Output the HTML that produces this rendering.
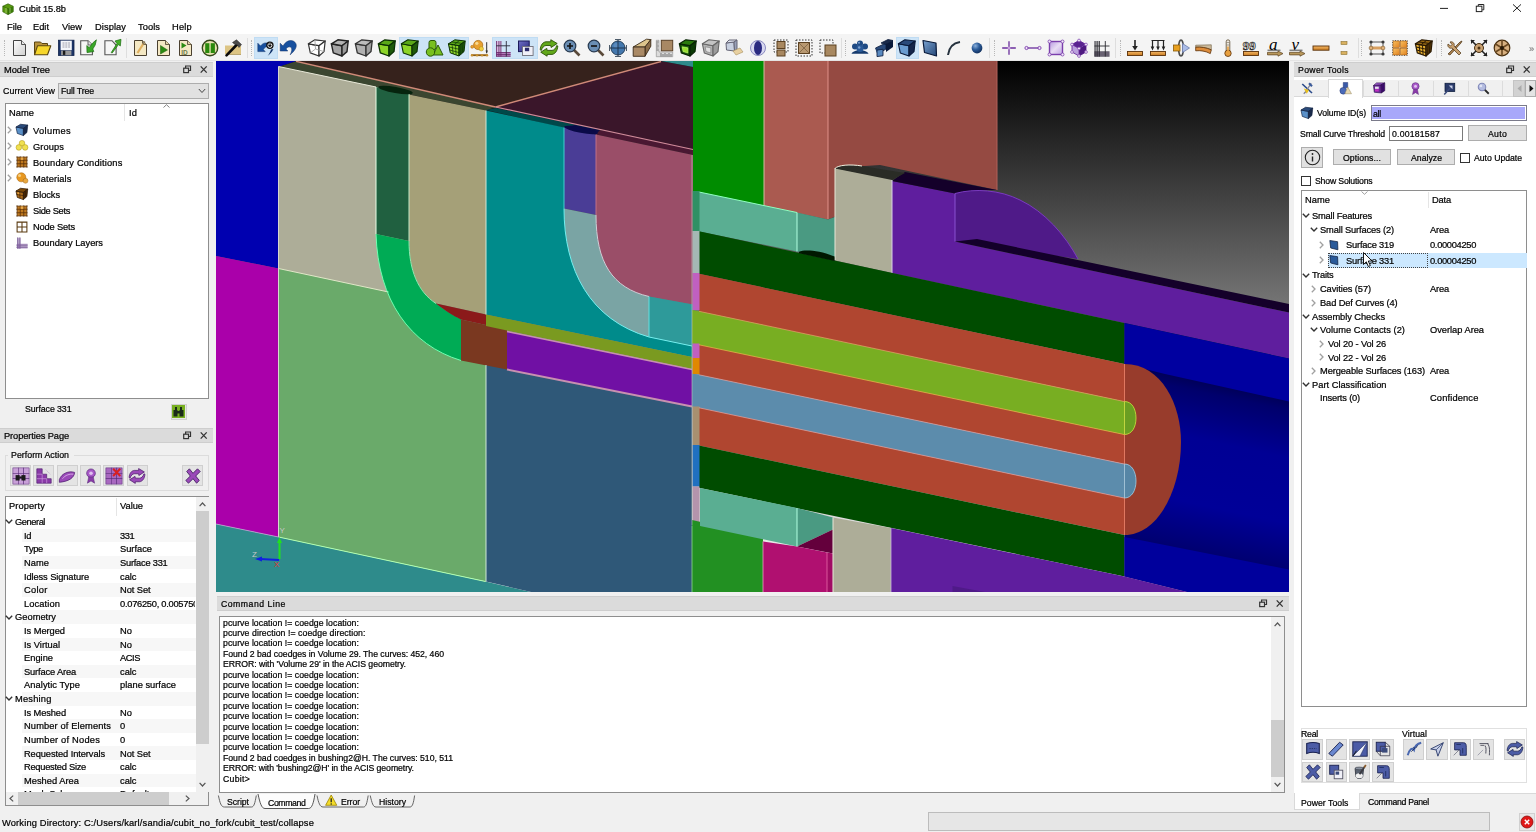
<!DOCTYPE html>
<html lang="en"><head><meta charset="utf-8"><title>Cubit 15.8b</title>
<style>
*{box-sizing:border-box;margin:0;padding:0}
html,body{width:1536px;height:832px;overflow:hidden;background:#f0f0f0;font-family:"Liberation Sans",sans-serif;color:#000;-webkit-font-smoothing:antialiased}
#app{position:relative;width:1536px;height:832px;overflow:hidden;background:#f0f0f0}
.t{position:absolute;white-space:pre;line-height:16px;height:16px;will-change:transform;-webkit-text-stroke:0.22px currentColor}
.s{font-size:10px}
.m{font-size:9.3px}
.h{font-size:8.8px}
.c{font-size:8.7px}
.ic{position:absolute;overflow:visible}
.btn{background:#e1e1e1;border:1px solid #adadad}
.hl{position:absolute;background:#cde4f7;border:1px solid #c0dcf3}
.dock{position:absolute;background:#dbdbdb;border-top:1px solid #cecece;border-bottom:1px solid #cecece}
.white{background:#fff;border:1px solid #8e8e8e}
.sep{position:absolute;width:1px;background:#dedede}
.hd{position:absolute;width:2px;border-left:1px dotted #b8b8b8}
</style></head><body><div id="app">
<div class="" style="position:absolute;left:0.0px;top:0.0px;width:1536.0px;height:18.0px;background:#fff"></div>
<svg class="ic" style="left:2px;top:3px" width="12" height="12" viewBox="0 0 15 15"><path d="M7.5,1 L14,4 V11 L7.5,14.5 L1,11 V4 Z" fill="#5a9a10" stroke="#2a5a04" stroke-width="0.8"/><path d="M7.5,7 L14,4 V11 L7.5,14.5 Z" fill="#3a7a08"/><path d="M7.5,7 V14.5 M7.5,7 L1,4" stroke="#2a5a04" stroke-width="0.8"/><path d="M5,6 V12.5 M10,6 V12.5" stroke="#d0e8a0" stroke-width="0.7"/></svg>
<span id="t1" class="t m" style="left:19.0px;top:1.1px;letter-spacing:-0.051px;">Cubit 15.8b</span>
<svg class="ic" style="left:1436px;top:2px" width="90" height="14" viewBox="1436 2 90 14"><path d="M1440,8.400 H1448" stroke="#222" stroke-width="1"/><rect x="1476.3" y="6.200" width="5.6" height="5.400" fill="none" stroke="#222" stroke-width="1"/><path d="M1478.300,6 V4.500 H1483.800 V9.800 H1482.200" fill="none" stroke="#222" stroke-width="1"/><path d="M1513,4.400 L1521,11.800 M1521,4.400 L1513,11.800" stroke="#222" stroke-width="1"/></svg>
<div class="" style="position:absolute;left:0.0px;top:18.0px;width:1536.0px;height:16.0px;background:#fff"></div>
<span id="t2" class="t m" style="left:6.5px;top:18.9px;letter-spacing:0.004px;">File</span>
<span id="t3" class="t m" style="left:33.0px;top:18.9px;letter-spacing:-0.008px;">Edit</span>
<span id="t4" class="t m" style="left:62.0px;top:18.9px;letter-spacing:0.004px;">View</span>
<span id="t5" class="t m" style="left:95.0px;top:18.9px;letter-spacing:0.074px;">Display</span>
<span id="t6" class="t m" style="left:138.0px;top:18.9px;letter-spacing:0.059px;">Tools</span>
<span id="t7" class="t m" style="left:172.0px;top:18.9px;letter-spacing:0.219px;">Help</span>
<div class="" style="position:absolute;left:0.0px;top:34.0px;width:1536.0px;height:27.0px;background:#f4f4f4;border-bottom:1px solid #e4e4e4"></div>
<div class="hd" style="left:4.0px;top:40px;height:16px"></div>
<div class="hd" style="left:251.0px;top:40px;height:16px"></div>
<div class="hd" style="left:845.0px;top:40px;height:16px"></div>
<div class="hd" style="left:994.0px;top:40px;height:16px"></div>
<div class="hd" style="left:1120.0px;top:40px;height:16px"></div>
<div class="hd" style="left:1361.0px;top:40px;height:16px"></div>
<div class="hd" style="left:1440.5px;top:40px;height:16px"></div>
<div class="sep" style="left:126.0px;top:38px;height:20px"></div>
<div class="sep" style="left:246.5px;top:38px;height:20px"></div>
<div class="sep" style="left:841.0px;top:38px;height:20px"></div>
<div class="sep" style="left:989.0px;top:38px;height:20px"></div>
<div class="sep" style="left:1115.0px;top:38px;height:20px"></div>
<div class="sep" style="left:1357.5px;top:38px;height:20px"></div>
<div class="sep" style="left:1436.0px;top:38px;height:20px"></div>
<div class="hl" style="left:254.0px;top:37px;width:24.0px;height:21.5px"></div>
<div class="hl" style="left:399.0px;top:37px;width:69.5px;height:21.5px"></div>
<div class="hl" style="left:492.0px;top:37px;width:46.0px;height:21.5px"></div>
<div class="hl" style="left:895.5px;top:37px;width:23.5px;height:21.5px"></div>
<svg class="ic" style="left:10.0px;top:38.0px" width="20" height="20" viewBox="0 0 20 20"><defs><linearGradient id="gnew" x1="0" y1="0" x2="1" y2="1"><stop offset="0" stop-color="#fff"/><stop offset="1" stop-color="#d0d0d0"/></linearGradient></defs><path d="M3.500,2.500 H11.500 L15.500,6.500 V17.500 H3.500 Z" fill="url(#gnew)" stroke="#444" stroke-width="1"/><path d="M11.500,2.500 V6.500 H15.500" fill="#e8e8e8" stroke="#444" stroke-width="0.900"/></svg>
<svg class="ic" style="left:32.0px;top:38.0px" width="20" height="20" viewBox="0 0 20 20"><path d="M2.500,16.500 V4 H8.500 L10,5.500 H15.500 V8" fill="#b8923c" stroke="#5a4510" stroke-width="1"/><path d="M2.500,16.800 L5.500,7.800 H18.800 L15.500,16.800 Z" fill="#f6d62c" stroke="#5a4510" stroke-width="1.1" stroke-linejoin="round"/></svg>
<svg class="ic" style="left:56.0px;top:38.0px" width="20" height="20" viewBox="0 0 20 20"><rect x="2.500" y="2.200" width="15.500" height="15.300" fill="#1c3468" stroke="#10224a" stroke-width="0.8"/><rect x="4.600" y="2.700" width="11.200" height="9.400" fill="#f4f6fa"/><rect x="5.100" y="12.500" width="10.300" height="4.800" fill="#9a9a9a"/><rect x="6.900" y="12.700" width="2.400" height="4.200" fill="#1a1a1a"/><path d="M6.500,5 H14 M6.500,7 H14 M6.500,9 H14" stroke="#8a8a98" stroke-width="0.8" stroke-dasharray="2,0.800"/></svg>
<svg class="ic" style="left:78.0px;top:38.0px" width="20" height="20" viewBox="0 0 20 20"><path d="M2.700,2.700 H10 L14.400,7 V16.750 H2.700 Z" fill="#f6f6f6" stroke="#555" stroke-width="1.1"/><path d="M10,2.700 V7 H14.400" fill="#e0e0e0" stroke="#555" stroke-width="0.9"/><path d="M18.400,1.800 L17.200,7 L14.800,11 L15.800,13.600 L9,14.600 L8.800,7.500 L11.200,9.600 L15.200,4.500 Z" fill="#3aa828" stroke="#1a6a10" stroke-width="0.7"/></svg>
<svg class="ic" style="left:102.0px;top:38.0px" width="20" height="20" viewBox="0 0 20 20"><path d="M2.900,2.700 H10 L14.100,7 V16.750 H2.900 Z" fill="#f6f6f6" stroke="#555" stroke-width="1.1"/><path d="M9.200,14.600 L15,5.500 L13,3 L19,1.300 L18.300,8 L16.500,6.500 L10.200,15 Z" fill="#44b028" stroke="#1a6a10" stroke-width="0.7"/></svg>
<svg class="ic" style="left:131.0px;top:38.0px" width="20" height="20" viewBox="0 0 20 20"><path d="M3.500,2.500 H11.500 L15.500,6.500 V17.500 H3.500 Z" fill="#f4e8c4" stroke="#4a4030" stroke-width="1"/><path d="M11.500,2.500 V6.500 H15.500" fill="#e4d4a8" stroke="#4a4030" stroke-width="0.8"/><path d="M6.500,15 L12.500,5.500" stroke="#e0b060" stroke-width="2.200"/><path d="M12,6.500 L13.800,3.500" stroke="#8a7a5a" stroke-width="1.600"/></svg>
<svg class="ic" style="left:154.0px;top:38.0px" width="20" height="20" viewBox="0 0 20 20"><path d="M3.500,2.500 H11.500 L15.500,6.500 V17.500 H3.500 Z" fill="#f4e8c4" stroke="#4a4030" stroke-width="1"/><path d="M11.500,2.500 V6.500 H15.500" fill="#e4d4a8" stroke="#4a4030" stroke-width="0.8"/><path d="M6.500,7.500 L13.500,12 L6.500,16 Z" fill="#2a8a12" stroke="#1a5a08" stroke-width="0.500"/></svg>
<svg class="ic" style="left:176.0px;top:38.0px" width="20" height="20" viewBox="0 0 20 20"><path d="M3.500,2.500 H11.500 L15.500,6.500 V17.500 H3.500 Z" fill="#f4e8c4" stroke="#4a4030" stroke-width="1"/><path d="M11.500,2.500 V6.500 H15.500" fill="#e4d4a8" stroke="#4a4030" stroke-width="0.8"/><path d="M5.500,4.500 L10.500,7.500 L5.500,10.500 Z" fill="#2a8a12"/><text x="5.300" y="16.600" font-family="Liberation Sans,sans-serif" font-size="6.500" font-weight="bold" fill="#6a7a4a">ID</text></svg>
<svg class="ic" style="left:200.0px;top:38.0px" width="20" height="20" viewBox="0 0 20 20"><circle cx="10" cy="10" r="7.700" fill="#e6e2b0" stroke="#34481a" stroke-width="1.400"/><rect x="5.200" y="5.200" width="4.200" height="9.800" fill="#2a8a0c"/><rect x="10.700" y="5.200" width="4.200" height="9.800" fill="#2a8a0c"/></svg>
<svg class="ic" style="left:222.0px;top:38.0px" width="20" height="20" viewBox="0 0 20 20"><rect x="3" y="7.500" width="16" height="8.500" fill="#dcc484"/><path d="M4,16.500 H19" stroke="#a89050" stroke-width="0.800"/><path d="M4.500,17.300 L15,6.500" stroke="#0a0a0a" stroke-width="2.600" stroke-linecap="round"/><path d="M10.500,4.500 L14.500,1.800 L19.500,6.500 L17,9.500 L15.500,7 L13,6.500 Z" fill="#4a4a4a" stroke="#222" stroke-width="0.500"/></svg>
<svg class="ic" style="left:256.0px;top:38.0px" width="20" height="20" viewBox="0 0 20 20"><path d="M1.8,5.2 L1.8,13.6 L9.2,13.6 L7.300,11.500 C8.500,9.500 10,8.500 12,8.500 L11,5 C8,4.500 6,6 4.500,8 Z" fill="#17509e" stroke="#0c2e66" stroke-width="0.5"/><path d="M17.4,11 C16,14 14,16.500 11.700,17.800 C13.500,15.500 14.500,13.500 15,11.500 Z" fill="#0c2e66"/><circle cx="13.9" cy="7.2" r="3.7" fill="#111"/><circle cx="13.9" cy="7.4" r="2" fill="none" stroke="#eee" stroke-width="1"/><path d="M13.9,4.400 V7.200" stroke="#111" stroke-width="2"/><path d="M13.9,4.600 V7" stroke="#eee" stroke-width="0.9"/></svg>
<svg class="ic" style="left:278.0px;top:38.0px" width="20" height="20" viewBox="0 0 20 20"><path d="M2.2,5.2 L2.2,13 L9.8,13 L8,11 C9.500,8.800 12,8.200 13.200,9.500 C14.500,11 13.500,14 12.200,16.800 C16.500,13 19.500,9 17.800,5.500 C15.800,1.500 9,0.800 5,8 Z" fill="#17509e" stroke="#0c2e66" stroke-width="0.5"/></svg>
<svg class="ic" style="left:307.0px;top:38.0px" width="20" height="20" viewBox="0 0 20 20"><path d="M1.4,5.8 L12,7.7 L12,18 L3.3,14.9 Z" fill="#fff" stroke="#333" stroke-width="1.2" stroke-linejoin="round"/><path d="M1.4,5.8 L7.9,1.8 L18.2,3 L12,7.7 Z" fill="#fff" stroke="#333" stroke-width="1.2" stroke-linejoin="round"/><path d="M12,7.7 L18.2,3 L17,13.6 L12,18 Z" fill="#fff" stroke="#333" stroke-width="1.2" stroke-linejoin="round"/><path d="M7.9,1.8 L8.5,11 L3.3,14.9 M8.5,11 L17,13.6" stroke="#999" stroke-width="0.8" fill="none"/></svg>
<svg class="ic" style="left:330.0px;top:38.0px" width="20" height="20" viewBox="0 0 20 20"><path d="M1.4,5.8 L12,7.7 L12,18 L3.3,14.9 Z" fill="#a4a4a4" stroke="#222" stroke-width="1.4" stroke-linejoin="round"/><path d="M1.4,5.8 L7.9,1.8 L18.2,3 L12,7.7 Z" fill="#b4b4b4" stroke="#222" stroke-width="1.4" stroke-linejoin="round"/><path d="M12,7.7 L18.2,3 L17,13.6 L12,18 Z" fill="#9a9a9a" stroke="#222" stroke-width="1.4" stroke-linejoin="round"/></svg>
<svg class="ic" style="left:354.0px;top:38.0px" width="20" height="20" viewBox="0 0 20 20"><path d="M1.4,5.8 L12,7.7 L12,18 L3.3,14.9 Z" fill="#b0b0b0" stroke="#333" stroke-width="1.3" stroke-linejoin="round"/><path d="M1.4,5.8 L7.9,1.8 L18.2,3 L12,7.7 Z" fill="#bcbcbc" stroke="#333" stroke-width="1.3" stroke-linejoin="round"/><path d="M12,7.7 L18.2,3 L17,13.6 L12,18 Z" fill="#a0a0a0" stroke="#333" stroke-width="1.3" stroke-linejoin="round"/></svg>
<svg class="ic" style="left:377.0px;top:38.0px" width="20" height="20" viewBox="0 0 20 20"><path d="M1.4,5.8 L12,7.7 L12,18 L3.3,14.9 Z" fill="#8cd428" stroke="#0c3004" stroke-width="1.3" stroke-linejoin="round"/><path d="M1.4,5.8 L7.9,1.8 L18.2,3 L12,7.7 Z" fill="#5aa818" stroke="#0c3004" stroke-width="1.3" stroke-linejoin="round"/><path d="M12,7.7 L18.2,3 L17,13.6 L12,18 Z" fill="#1e5a0a" stroke="#0c3004" stroke-width="1.3" stroke-linejoin="round"/></svg>
<svg class="ic" style="left:400.0px;top:38.0px" width="20" height="20" viewBox="0 0 20 20"><path d="M1.4,5.8 L12,7.7 L12,18 L3.3,14.9 Z" fill="#8cd428" stroke="#0c3004" stroke-width="1.1" stroke-linejoin="round"/><path d="M1.4,5.8 L7.9,1.8 L18.2,3 L12,7.7 Z" fill="#5aa818" stroke="#0c3004" stroke-width="1.1" stroke-linejoin="round"/><path d="M12,7.7 L18.2,3 L17,13.6 L12,18 Z" fill="#1e5a0a" stroke="#0c3004" stroke-width="1.1" stroke-linejoin="round"/></svg>
<svg class="ic" style="left:424.0px;top:38.0px" width="20" height="20" viewBox="0 0 20 20"><rect x="5" y="2.5" width="7" height="9" rx="2" fill="#78c020" stroke="#2a5a08"/><path d="M14,7 L19,17 H9 Z" fill="#78c020" stroke="#2a5a08"/><circle cx="6.5" cy="14" r="4.2" fill="#78c020" stroke="#2a5a08"/></svg>
<svg class="ic" style="left:447.0px;top:38.0px" width="20" height="20" viewBox="0 0 20 20"><path d="M1.4,5.8 L12,7.7 L12,18 L3.3,14.9 Z" fill="#8cd428" stroke="#0c3004" stroke-width="1.0" stroke-linejoin="round"/><path d="M1.4,5.8 L7.9,1.8 L18.2,3 L12,7.7 Z" fill="#5aa818" stroke="#0c3004" stroke-width="1.0" stroke-linejoin="round"/><path d="M12,7.7 L18.2,3 L17,13.6 L12,18 Z" fill="#1e5a0a" stroke="#0c3004" stroke-width="1.0" stroke-linejoin="round"/><path d="M5,6.4 L6.2,16 M8.5,7.1 L9.1,17 M2,9 L12,11.2 M2.7,12 L12,14.6 M14,6.1 L13.7,16.5 M16,4.6 L15.4,15 M4.6,3.9 L15,5.4 M12.5,2.400 L7,6.8" stroke="#0c3004" stroke-width="0.7"/></svg>
<svg class="ic" style="left:470.0px;top:38.0px" width="20" height="20" viewBox="0 0 20 20"><circle cx="8.200" cy="7" r="4.600" fill="#e8a030" stroke="#a86810" stroke-width="0.700"/><circle cx="6.800" cy="5.300" r="1.600" fill="#f8d890"/><circle cx="11.300" cy="10.800" r="2.200" fill="#f0d040" stroke="#a88010" stroke-width="0.500"/><circle cx="2.200" cy="8.800" r="1.500" fill="#e8a030" stroke="#a86810" stroke-width="0.500"/><path d="M16.700,4.200 V15.200" stroke="#333" stroke-width="1"/><path d="M15.500,12.500 H17.900 L16.700,15.500 Z" fill="#333"/><path d="M1.200,17.200 H17.500" stroke="#8a5a10" stroke-width="1.800"/><g fill="#c89030"><circle cx="2" cy="17.200" r="1.200"/><circle cx="7" cy="17.200" r="1.200"/><circle cx="12" cy="17.200" r="1.200"/><circle cx="17" cy="17.200" r="1.200"/></g></svg>
<svg class="ic" style="left:494.0px;top:38.0px" width="20" height="20" viewBox="0 0 20 20"><rect x="2.100" y="3" width="5.200" height="15.500" fill="#d8a8d0" opacity="0.700"/><rect x="2.100" y="14" width="14.500" height="4.500" fill="#a860a8" opacity="0.800"/><path d="M2.500,3 V18.500 M4.900,3 V18.500 M6.900,3 V18.500 M2.100,14.500 H16.600 M2.100,16.500 H16.600 M2.100,18.300 H16.600" stroke="#6a2a6a" stroke-width="0.800"/><path d="M12.300,3 V18.500 M2.100,7.800 H16.200" stroke="#2a2a3a" stroke-width="0.900"/></svg>
<svg class="ic" style="left:516.0px;top:38.0px" width="20" height="20" viewBox="0 0 20 20"><defs><linearGradient id="gov" x1="0" y1="0" x2="1" y2="1"><stop offset="0" stop-color="#7070c8"/><stop offset="1" stop-color="#28287a"/></linearGradient></defs><rect x="2.500" y="3" width="10.700" height="10.600" fill="url(#gov)" stroke="#1a1a5a" stroke-width="1"/><rect x="6.500" y="8.500" width="10.600" height="9" fill="#f0f0f8" stroke="#70707a" stroke-width="0.900"/><rect x="8.900" y="9.700" width="4.300" height="3.500" fill="#2a2a6a"/></svg>
<svg class="ic" style="left:539.0px;top:38.0px" width="20" height="20" viewBox="0 0 20 20"><path d="M1.2,11.8 C1.5,7 4,4 7,3.8 L11.8,3.8 L11.8,1.75 L18.2,5.5 L12.1,9.5 L11.8,7.5 L7,7.5 C5,7.6 3.2,9.5 2.3,12.4 Z" fill="#62a81a" stroke="#2a5208" stroke-width="0.9" stroke-linejoin="round"/><path d="M18.8,8 C18.5,13 16,16 13,16.4 L8.1,16.4 L8.1,18.2 L1.75,14.2 L7.8,10.4 L8.1,12.4 L13,12.4 C15,12.3 16.8,10.5 17.7,7.6 Z" fill="#62a81a" stroke="#2a5208" stroke-width="0.9" stroke-linejoin="round"/></svg>
<svg class="ic" style="left:562.0px;top:38.0px" width="20" height="20" viewBox="0 0 20 20"><path d="M11,11 L17.5,17.5" stroke="#5a4a3a" stroke-width="2.6"/><circle cx="8" cy="8" r="5.8" fill="#6a8eb4" stroke="#26384e" stroke-width="1.2"/><path d="M5,8 H11 M8,5 V11" stroke="#111" stroke-width="1.6"/></svg>
<svg class="ic" style="left:586.0px;top:38.0px" width="20" height="20" viewBox="0 0 20 20"><path d="M11,11 L17.5,17.5" stroke="#5a4a3a" stroke-width="2.6"/><circle cx="8" cy="8" r="5.8" fill="#6a8eb4" stroke="#26384e" stroke-width="1.2"/><path d="M5,8 H11" stroke="#111" stroke-width="1.6"/></svg>
<svg class="ic" style="left:608.0px;top:38.0px" width="20" height="20" viewBox="0 0 20 20"><circle cx="10" cy="10" r="7" fill="#4478ae" stroke="#26405a" stroke-width="1"/><circle cx="8" cy="7.500" r="2.500" fill="#6a98c8" opacity="0.600"/><path d="M10,2 V18 M2,10 H18" stroke="#1e3048" stroke-width="0.900"/><path d="M7,1.500 H13 M7,18.500 H13 M1.500,7 V13 M18.500,7 V13" stroke="#3a4a5a" stroke-width="0.900"/></svg>
<svg class="ic" style="left:632.0px;top:38.0px" width="20" height="20" viewBox="0 0 20 20"><path d="M1.200,9 L14.500,1.200 L18.800,1.600 L13,9 Z" fill="#dcc48c" stroke="#3a2a18" stroke-width="0.900" stroke-linejoin="round"/><path d="M13,9 L18.800,1.600 L18.800,8.200 L13,18.300 Z" fill="#8a6c48" stroke="#3a2a18" stroke-width="0.900" stroke-linejoin="round"/><path d="M1.200,9 H13 V18.300 H1.200 Z" fill="#aa8a66" stroke="#3a2a18" stroke-width="0.900" stroke-linejoin="round"/></svg>
<svg class="ic" style="left:655.0px;top:38.0px" width="20" height="20" viewBox="0 0 20 20"><path d="M1.300,2.300 H4 V14 H17.700 V18.700 H1.300 Z" fill="#dcdcdc" stroke="#8a8a8a" stroke-width="0.600"/><path d="M6,15 V18.500 M8,16 V18.500 M10,15 V18.500 M12,16 V18.500 M14,15 V18.500 M16,16 V18.500 M1.500,4 H3.500 M1.500,6 H2.800 M1.500,8 H3.500 M1.500,10 H2.800 M1.500,12 H3.500" stroke="#444" stroke-width="0.700"/><rect x="6.300" y="2.300" width="11.400" height="10.500" fill="#a88864" stroke="#5a4228" stroke-width="1"/></svg>
<svg class="ic" style="left:678.0px;top:38.0px" width="20" height="20" viewBox="0 0 20 20"><path d="M1.4,5.8 L12,7.7 L12,18 L3.3,14.9 Z" fill="#1a5a08" stroke="#082404" stroke-width="1.2" stroke-linejoin="round"/><path d="M1.4,5.8 L7.9,1.8 L18.2,3 L12,7.7 Z" fill="#2a7a0c" stroke="#082404" stroke-width="1.2" stroke-linejoin="round"/><path d="M12,7.7 L18.2,3 L17,13.6 L12,18 Z" fill="#0a3a04" stroke="#082404" stroke-width="1.2" stroke-linejoin="round"/><path d="M4.200,8.800 L9.800,9.800 L9.800,15 L5,13.500 Z" fill="#98e030" stroke="#d0ff80" stroke-width="0.6"/></svg>
<svg class="ic" style="left:701.0px;top:38.0px" width="20" height="20" viewBox="0 0 20 20"><path d="M1.4,5.8 L12,7.7 L12,18 L3.3,14.9 Z" fill="#b4b4b4" stroke="#666" stroke-width="1.1" stroke-linejoin="round"/><path d="M1.4,5.8 L7.9,1.8 L18.2,3 L12,7.7 Z" fill="#c4c4c4" stroke="#666" stroke-width="1.1" stroke-linejoin="round"/><path d="M12,7.7 L18.2,3 L17,13.6 L12,18 Z" fill="#9c9c9c" stroke="#666" stroke-width="1.1" stroke-linejoin="round"/><path d="M4.200,8.800 L9.800,9.800 L9.800,15 L5,13.500 Z" fill="#e0e0e0" stroke="#777" stroke-width="0.6"/></svg>
<svg class="ic" style="left:724.0px;top:38.0px" width="20" height="20" viewBox="0 0 20 20"><path d="M2,5 L10,4 L10.5,13 L2.5,12 Z" fill="#c8d0e0" stroke="#667"/><path d="M2,5 L5,2 L13,2 L10,4 Z" fill="#e0e4f0" stroke="#667"/><path d="M10,4 L13,2 L13,11 L10.5,13 Z" fill="#98a0b8" stroke="#667"/><path d="M9,13 L16,10 L19,14 L12,17 Z" fill="#e8d0a0" stroke="#a89060" stroke-width="0.6"/></svg>
<svg class="ic" style="left:748.0px;top:38.0px" width="20" height="20" viewBox="0 0 20 20"><circle cx="10" cy="10" r="7.5" fill="#d8d8f0" stroke="#8a8ac0"/><ellipse cx="10" cy="10" rx="4" ry="7" fill="#2a2a80"/></svg>
<svg class="ic" style="left:771.0px;top:38.0px" width="20" height="20" viewBox="0 0 20 20"><rect x="3" y="2" width="14" height="12" fill="none" stroke="#333" stroke-dasharray="1.5,1.5"/><rect x="6" y="3.5" width="8" height="7" fill="#a88860" stroke="#5a4020"/><rect x="6" y="12" width="8" height="6" fill="#a88860" stroke="#5a4020"/></svg>
<svg class="ic" style="left:794.0px;top:38.0px" width="20" height="20" viewBox="0 0 20 20"><rect x="2" y="2" width="16" height="16" fill="none" stroke="#333" stroke-dasharray="1.5,1.5"/><rect x="4.5" y="4.5" width="11" height="11" fill="#b89870" stroke="#5a4020"/><path d="M4.5,4.5 L15.5,15.5 M15.5,4.5 L4.5,15.5" stroke="#7a6040" stroke-width="0.8"/></svg>
<svg class="ic" style="left:818.0px;top:38.0px" width="20" height="20" viewBox="0 0 20 20"><rect x="2" y="2" width="13" height="13" fill="none" stroke="#333" stroke-dasharray="1.5,1.5"/><rect x="7" y="7" width="11" height="11" fill="#a88860" stroke="#5a4020"/></svg>
<svg class="ic" style="left:850.0px;top:38.0px" width="20" height="20" viewBox="0 0 20 20"><circle cx="10" cy="5.500" r="3" fill="#1e4a84"/><circle cx="5" cy="8.500" r="3" fill="#1e4a84"/><circle cx="15" cy="8.500" r="3" fill="#1e4a84"/><path d="M1.500,15.800 C3,11 17,11 18.500,15.800 Z" fill="#163a6c"/><circle cx="10" cy="10.500" r="3.600" fill="#2a5a98"/><circle cx="9" cy="4.800" r="1" fill="#7aa0d0"/><circle cx="9.200" cy="9.500" r="1.200" fill="#7aa0d0"/></svg>
<svg class="ic" style="left:874.0px;top:38.0px" width="20" height="20" viewBox="0 0 20 20"><path d="M1.5,10 L12,5 L12,11 L4,16 Z" fill="#2a4a7a" stroke="#0a1a3a" stroke-width="0.8"/><path d="M7,5 L14,1.5 L19,2.5 L12,6.5 Z" fill="#1a2a4a" stroke="#0a1a3a" stroke-width="0.8"/><path d="M12,6 L19,2.5 V9 L12,14 Z" fill="#0a1a3a"/><path d="M1.5,10 L4,16 L4.5,18 L2,13 Z" fill="#4a7ab0"/><rect x="3" y="11" width="6" height="6.5" fill="#5a8ac0" stroke="#0a1a3a" stroke-width="0.8" transform="skewY(-8) translate(0,1.5)"/></svg>
<svg class="ic" style="left:897.0px;top:38.0px" width="20" height="20" viewBox="0 0 20 20"><path d="M1.4,5.8 L12,7.7 L12,18 L3.3,14.9 Z" fill="#6a9cd0" stroke="#0a1a3a" stroke-width="1.1" stroke-linejoin="round"/><path d="M1.4,5.8 L7.9,1.8 L18.2,3 L12,7.7 Z" fill="#2a4a7a" stroke="#0a1a3a" stroke-width="1.1" stroke-linejoin="round"/><path d="M12,7.7 L18.2,3 L17,13.6 L12,18 Z" fill="#16264a" stroke="#0a1a3a" stroke-width="1.1" stroke-linejoin="round"/></svg>
<svg class="ic" style="left:920.0px;top:38.0px" width="20" height="20" viewBox="0 0 20 20"><defs><linearGradient id="gsf" x1="0" y1="0" x2="1" y2="1"><stop offset="0" stop-color="#7aa2d0"/><stop offset="1" stop-color="#264878"/></linearGradient></defs><path d="M3,2.500 L16,5 L16.500,18 L4.500,14.500 Z" fill="url(#gsf)" stroke="#0a1a3a" stroke-width="1.200" stroke-linejoin="round"/></svg>
<svg class="ic" style="left:944.0px;top:38.0px" width="20" height="20" viewBox="0 0 20 20"><path d="M4,17 C5,9 9,5 16,4" fill="none" stroke="#26323e" stroke-width="2"/></svg>
<svg class="ic" style="left:967.0px;top:38.0px" width="20" height="20" viewBox="0 0 20 20"><defs><radialGradient id="gvx" cx="0.350" cy="0.300" r="0.800"><stop offset="0" stop-color="#8ab0dc"/><stop offset="0.450" stop-color="#2a5a98"/><stop offset="1" stop-color="#0e2a54"/></radialGradient></defs><circle cx="10" cy="10" r="5.400" fill="url(#gvx)"/></svg>
<svg class="ic" style="left:999.0px;top:38.0px" width="20" height="20" viewBox="0 0 20 20"><path d="M10,3.200 V16.800 M3.200,10 H16.800" stroke="#6a2e9c" stroke-width="1.300"/><circle cx="10" cy="10" r="1.500" fill="#c8a0e0"/></svg>
<svg class="ic" style="left:1023.0px;top:38.0px" width="20" height="20" viewBox="0 0 20 20"><path d="M4,10 H16" stroke="#6a2e9c" stroke-width="1.300"/><circle cx="3.500" cy="10" r="1.600" fill="#f0e0f8" stroke="#7a3eac" stroke-width="0.900"/><circle cx="16.500" cy="10" r="1.600" fill="#f0e0f8" stroke="#7a3eac" stroke-width="0.900"/></svg>
<svg class="ic" style="left:1046.0px;top:38.0px" width="20" height="20" viewBox="0 0 20 20"><defs><linearGradient id="gps" x1="0" y1="0" x2="1" y2="1"><stop offset="0" stop-color="#b898e0"/><stop offset="0.500" stop-color="#e8dcf4"/><stop offset="1" stop-color="#c0a4e4"/></linearGradient></defs><rect x="3.500" y="3.500" width="13" height="13" fill="url(#gps)" stroke="#7a3eac" stroke-width="1.400"/><g fill="#f4ecfa" stroke="#7a3eac" stroke-width="0.800"><circle cx="3.500" cy="3.500" r="1.500"/><circle cx="16.500" cy="3.500" r="1.500"/><circle cx="3.500" cy="16.500" r="1.500"/><circle cx="16.500" cy="16.500" r="1.500"/></g></svg>
<svg class="ic" style="left:1069.0px;top:38.0px" width="20" height="20" viewBox="0 0 20 20"><path d="M10,2.500 L17,6.500 V14 L10,18 L3,14 V6.500 Z" fill="#baa0dc" stroke="#6a2a9a" stroke-width="0.900"/><path d="M10,10.500 L17,6.500 V14 L10,18 Z" fill="#4e1a80"/><path d="M10,2.500 L17,6.500 L10,10.500 L3,6.500 Z" fill="#5a2490"/><path d="M10,10.500 L3,6.500 M10,10.500 V18" stroke="#6a2a9a" stroke-width="0.800"/><g fill="#f4ecfa" stroke="#7a3eac" stroke-width="0.700"><circle cx="10" cy="2.500" r="1.400"/><circle cx="17" cy="6.500" r="1.400"/><circle cx="3" cy="6.500" r="1.400"/><circle cx="10" cy="10.500" r="1.400"/><circle cx="3" cy="14" r="1.400"/><circle cx="17" cy="14" r="1.400"/><circle cx="10" cy="18" r="1.400"/></g></svg>
<svg class="ic" style="left:1092.0px;top:38.0px" width="20" height="20" viewBox="0 0 20 20"><rect x="2.500" y="3" width="5.500" height="15.500" fill="#8a8a90" opacity="0.600"/><rect x="2.500" y="13.500" width="15" height="5" fill="#6a5a78" opacity="0.700"/><path d="M3,3 V18.500 M5.200,3 V18.500 M7.400,3 V18.500 M2.500,14 H17.500 M2.500,16 H17.500 M2.500,18 H17.500" stroke="#2a2a30" stroke-width="0.800"/><path d="M13.300,3 V18.500 M2.500,8 H17.500" stroke="#2a2a30" stroke-width="0.900"/></svg>
<svg class="ic" style="left:1125.0px;top:38.0px" width="20" height="20" viewBox="0 0 20 20"><defs><linearGradient id="gob" x1="0" y1="0" x2="0" y2="1"><stop offset="0" stop-color="#f4b868"/><stop offset="1" stop-color="#c87a20"/></linearGradient></defs><rect x="2.500" y="13.500" width="15" height="4" fill="url(#gob)" stroke="#5a3008" stroke-width="0.900"/><path d="M10,2 V9.500" stroke="#222" stroke-width="1.600"/><path d="M7.200,8 H12.800 L10,12.500 Z" fill="#222"/></svg>
<svg class="ic" style="left:1148.0px;top:38.0px" width="20" height="20" viewBox="0 0 20 20"><defs><linearGradient id="gob" x1="0" y1="0" x2="0" y2="1"><stop offset="0" stop-color="#f4b868"/><stop offset="1" stop-color="#c87a20"/></linearGradient></defs><rect x="2.500" y="13.500" width="15" height="4" fill="url(#gob)" stroke="#5a3008" stroke-width="0.900"/><path d="M3.500,2.500 H16.500 M4.500,2.500 V9.500 M10,2.500 V9.500 M15.500,2.500 V9.500" stroke="#222" stroke-width="1.200" fill="none"/><path d="M2.700,8.500 H6.300 L4.500,12.500 Z M8.200,8.500 H11.800 L10,12.500 Z M13.700,8.500 H17.300 L15.500,12.500 Z" fill="#222"/></svg>
<svg class="ic" style="left:1171.0px;top:38.0px" width="20" height="20" viewBox="0 0 20 20"><ellipse cx="10" cy="10" rx="2.400" ry="8" fill="none" stroke="#4a4a4a" stroke-width="1.500"/><rect x="2.500" y="7" width="6.500" height="6" fill="#e8a020" stroke="#8a5a08" stroke-width="0.800"/><path d="M11.500,5.500 L18.500,10 L11.500,14.500 Z" fill="#aabce8" stroke="#6a7aa8" stroke-width="0.800"/></svg>
<svg class="ic" style="left:1194.0px;top:38.0px" width="20" height="20" viewBox="0 0 20 20"><path d="M1.700,7.200 L17.300,6.800 L17.300,11.800 C12,9.500 7,8.800 1.700,9.200 Z" fill="#cdbb9c" stroke="#6a5a40" stroke-width="0.600"/><path d="M1.700,9.200 C7,8.800 12,9.500 17.300,11.800 L16.300,15.600 C11.500,13 6.500,12.300 1.700,12.800 Z" fill="#dc8c3c" stroke="#5a3008" stroke-width="0.800"/></svg>
<svg class="ic" style="left:1218.0px;top:38.0px" width="20" height="20" viewBox="0 0 20 20"><rect x="8.200" y="1.800" width="3.600" height="12" rx="1.800" fill="#ece8e0" stroke="#5a4a30" stroke-width="0.800"/><path d="M8.500,4.500 H11.500 M8.500,7 H11.500" stroke="#8a8070" stroke-width="0.700"/><circle cx="10" cy="15.300" r="3.200" fill="#e8a040" stroke="#5a3008" stroke-width="0.800"/><rect x="9.200" y="8.500" width="1.600" height="6" fill="#e8a040"/></svg>
<svg class="ic" style="left:1241.0px;top:38.0px" width="20" height="20" viewBox="0 0 20 20"><defs><linearGradient id="gob9" x1="0" y1="0" x2="0" y2="1"><stop offset="0" stop-color="#f4b868"/><stop offset="1" stop-color="#c87a20"/></linearGradient></defs><rect x="2.500" y="13.500" width="15" height="4" fill="url(#gob9)" stroke="#5a3008" stroke-width="0.900"/><text x="1.800" y="12" font-family="Liberation Serif,serif" font-size="13" font-weight="bold" fill="#ece6da" stroke="#2a2a2a" stroke-width="0.700">99</text></svg>
<svg class="ic" style="left:1265.0px;top:38.0px" width="20" height="20" viewBox="0 0 20 20"><text x="4" y="11.500" font-family="Liberation Serif,serif" font-size="17" font-style="italic" fill="#000">a</text><path d="M2.500,12.200 H15.500" stroke="#222" stroke-width="0.800"/><path d="M2.500,14.300 H13 V13 L18,15.600 L13,18.200 V16.900 H2.500 Z" fill="#b8985c" stroke="#5a4020" stroke-width="0.700"/></svg>
<svg class="ic" style="left:1287.0px;top:38.0px" width="20" height="20" viewBox="0 0 20 20"><text x="4.500" y="11.500" font-family="Liberation Serif,serif" font-size="17" font-style="italic" fill="#000">v</text><path d="M2.500,12.200 H15.500" stroke="#222" stroke-width="0.800"/><path d="M2.500,14.300 H13 V13 L18,15.600 L13,18.200 V16.900 H2.500 Z" fill="#b8985c" stroke="#5a4020" stroke-width="0.700"/></svg>
<svg class="ic" style="left:1311.0px;top:38.0px" width="20" height="20" viewBox="0 0 20 20"><defs><linearGradient id="gob2" x1="0" y1="0" x2="0" y2="1"><stop offset="0" stop-color="#f4b868"/><stop offset="1" stop-color="#c87a20"/></linearGradient></defs><rect x="2" y="8" width="16" height="4.200" fill="url(#gob2)" stroke="#5a3008" stroke-width="0.900"/></svg>
<svg class="ic" style="left:1334.0px;top:38.0px" width="20" height="20" viewBox="0 0 20 20"><rect x="7" y="3.5" width="6" height="3" fill="#d8b060" stroke="#8a7030" stroke-width="0.6"/><rect x="7" y="13.5" width="6" height="3" fill="#d8b060" stroke="#8a7030" stroke-width="0.6"/></svg>
<svg class="ic" style="left:1367.0px;top:38.0px" width="20" height="20" viewBox="0 0 20 20"><rect x="4" y="4" width="12" height="12" fill="none" stroke="#555" stroke-width="1"/><path d="M4,10 H16" stroke="#d8a060" stroke-width="3"/><g fill="#3a3a3a"><circle cx="4" cy="4" r="1.600"/><circle cx="16" cy="4" r="1.600"/><circle cx="4" cy="16" r="1.600"/><circle cx="16" cy="16" r="1.600"/></g><g fill="#e0b078" stroke="#7a5a30" stroke-width="0.600"><circle cx="4" cy="10" r="1.900"/><circle cx="16" cy="10" r="1.900"/></g></svg>
<svg class="ic" style="left:1390.0px;top:38.0px" width="20" height="20" viewBox="0 0 20 20"><defs><linearGradient id="gss" x1="0" y1="0" x2="1" y2="1"><stop offset="0" stop-color="#f8c060"/><stop offset="1" stop-color="#e08020"/></linearGradient></defs><g fill="url(#gss)" stroke="#a86010" stroke-width="0.600"><rect x="3" y="3" width="6.500" height="6.500"/><rect x="10.500" y="3" width="6.500" height="6.500"/><rect x="3" y="10.500" width="6.500" height="6.500"/><rect x="10.500" y="10.500" width="6.500" height="6.500"/></g><rect x="2.500" y="2.500" width="15" height="15" fill="none" stroke="#333" stroke-width="0.700" stroke-dasharray="1,1.500"/></svg>
<svg class="ic" style="left:1414.0px;top:38.0px" width="20" height="20" viewBox="0 0 20 20"><path d="M1.4,5.8 L12,7.7 L12,18 L3.3,14.9 Z" fill="#e8b030" stroke="#2a1a04" stroke-width="1.2" stroke-linejoin="round"/><path d="M1.4,5.8 L7.9,1.8 L18.2,3 L12,7.7 Z" fill="#9a6a14" stroke="#2a1a04" stroke-width="1.2" stroke-linejoin="round"/><path d="M12,7.7 L18.2,3 L17,13.6 L12,18 Z" fill="#5e3c08" stroke="#2a1a04" stroke-width="1.2" stroke-linejoin="round"/><path d="M5,6.4 L6.2,16 M8.5,7.1 L9.1,17 M2,9 L12,11.2 M2.7,12 L12,14.6 M14,6.1 L13.7,16.5 M16,4.6 L15.4,15 M4.6,3.9 L15,5.4 M12.5,2.400 L7,6.8" stroke="#2a1a04" stroke-width="1"/></svg>
<svg class="ic" style="left:1445.0px;top:38.0px" width="20" height="20" viewBox="0 0 20 20"><path d="M3,16 L15,4 L17,3 L16,5 L5,17 Z" fill="#a88050" stroke="#4a3010" stroke-width="0.7"/><path d="M5,4 C8,3 10,6 9,8 L16,15 L14,17 L7,10 C5,11 2,9 3,6 L5.5,8 L7,6.5 Z" fill="#c8a070" stroke="#4a3010" stroke-width="0.7"/></svg>
<svg class="ic" style="left:1469.0px;top:38.0px" width="20" height="20" viewBox="0 0 20 20"><circle cx="10" cy="10" r="4.5" fill="#c8a070" stroke="#4a3010"/><path d="M2,2 L7,7 M18,2 L13,7 M2,18 L7,13 M18,18 L13,13" stroke="#222" stroke-width="1.5"/><path d="M2,2 H6 L2,6 Z M18,2 H14 L18,6 Z M2,18 H6 L2,14 Z M18,18 H14 L18,14 Z" fill="#222"/><circle cx="10" cy="10" r="1.5" fill="#4a3010"/></svg>
<svg class="ic" style="left:1492.0px;top:38.0px" width="20" height="20" viewBox="0 0 20 20"><circle cx="10" cy="10" r="7.8" fill="#d8b080" stroke="#4a3010" stroke-width="1.2"/><path d="M10,10 L10,2.5 M10,10 L16.5,6 M10,10 L16.5,14 M10,10 L10,17.5 M10,10 L3.5,14 M10,10 L3.5,6" stroke="#6a4820" stroke-width="1.6"/><circle cx="10" cy="10" r="2" fill="#2a1a08"/></svg>
<span id="t8" class="t m" style="left:1529.0px;top:40.8px;color:#888;">»</span>
<div class="dock" style="left:0.0px;top:61.8px;width:212.5px;height:15px"></div><span id="t9" class="t m" style="left:4.0px;top:61.9px;letter-spacing:-0.052px;">Model Tree</span><svg class="ic" style="left:182.5px;top:63.8px" width="26" height="10" viewBox="0 0 26 10"><rect x="0.7" y="4.2" width="4.8" height="4.4" fill="none" stroke="#333" stroke-width="1.2"/><path d="M2.6,4 V2 H7.5 V6.5 H5.7" fill="none" stroke="#333" stroke-width="1.2"/><path d="M17.7,2.400 L23.700,8.600 M23.700,2.400 L17.700,8.600" stroke="#333" stroke-width="1.300"/></svg>
<span id="t10" class="t h" style="left:3.0px;top:83.3px;letter-spacing:0.109px;">Current View</span>
<div class="" style="position:absolute;left:57.5px;top:82.5px;width:151.0px;height:16.0px;background:#e1e1e1;border:1px solid #adadad"></div>
<span id="t11" class="t h" style="left:60.5px;top:83.3px;letter-spacing:-0.137px;">Full Tree</span>
<svg class="ic" style="left:198px;top:88px" width="8" height="6" viewBox="0 0 8 6"><path d="M0.8,1 L4,4.5 L7.2,1" fill="none" stroke="#444" stroke-width="1"/></svg>
<div class="white" style="position:absolute;left:4.5px;top:102.5px;width:204.5px;height:296.5px;"></div>
<span id="t12" class="t m" style="left:8.5px;top:104.8px;letter-spacing:0.047px;">Name</span>
<span id="t13" class="t m" style="left:128.7px;top:104.8px;letter-spacing:0.117px;">Id</span>
<div class="" style="position:absolute;left:124.3px;top:104.0px;width:1.0px;height:17.0px;background:#e5e5e5"></div>
<svg class="ic" style="left:163px;top:103.5px" width="7" height="4" viewBox="0 0 7 4"><path d="M0.5,3.5 L3.5,0.7 L6.5,3.5" fill="none" stroke="#666" stroke-width="0.8"/></svg>
<svg class="ic" style="left:7.2px;top:126.3px" width="5" height="8" viewBox="0 0 5 8"><path d="M0.8,0.8 L4,4 L0.8,7.2" fill="none" stroke="#a0a0a0" stroke-width="1.3"/></svg>
<svg class="ic" style="left:14.5px;top:123.3px" width="14" height="14" viewBox="0 0 20 20"><path d="M1.4,5.8 L12,7.7 L12,18 L3.3,14.9 Z" fill="#5a90c8" stroke="#0a1a3a" stroke-width="0.9" stroke-linejoin="round"/><path d="M1.4,5.8 L7.9,1.8 L18.2,3 L12,7.7 Z" fill="#2a4a7a" stroke="#0a1a3a" stroke-width="0.9" stroke-linejoin="round"/><path d="M12,7.7 L18.2,3 L17,13.6 L12,18 Z" fill="#1a2a4a" stroke="#0a1a3a" stroke-width="0.9" stroke-linejoin="round"/></svg>
<span id="t14" class="t m" style="left:32.8px;top:122.6px;letter-spacing:0.333px;">Volumes</span>
<svg class="ic" style="left:7.2px;top:142.3px" width="5" height="8" viewBox="0 0 5 8"><path d="M0.8,0.8 L4,4 L0.8,7.2" fill="none" stroke="#a0a0a0" stroke-width="1.3"/></svg>
<svg class="ic" style="left:14.5px;top:139.3px" width="14" height="14" viewBox="0 0 20 20"><circle cx="10" cy="6" r="4" fill="#f0e050" stroke="#a89010" stroke-width="0.7"/><circle cx="5.5" cy="12" r="4" fill="#f0e050" stroke="#a89010" stroke-width="0.7"/><circle cx="14.5" cy="12" r="4" fill="#f0e050" stroke="#a89010" stroke-width="0.7"/></svg>
<span id="t15" class="t m" style="left:32.8px;top:138.6px;letter-spacing:0.083px;">Groups</span>
<svg class="ic" style="left:7.2px;top:158.4px" width="5" height="8" viewBox="0 0 5 8"><path d="M0.8,0.8 L4,4 L0.8,7.2" fill="none" stroke="#a0a0a0" stroke-width="1.3"/></svg>
<svg class="ic" style="left:14.5px;top:155.4px" width="14" height="14" viewBox="0 0 20 20"><rect x="3" y="3" width="14" height="14" fill="#c07a20"/><path d="M2,7.5 H18 M2,12.5 H18 M7.5,2 V18 M12.5,2 V18 M3,2 V18 M17,2 V18 M2,3 H18 M2,17 H18" stroke="#5a3008" stroke-width="1.1"/><rect x="8" y="3.500" width="4" height="3.500" fill="#e8a848"/></svg>
<span id="t16" class="t m" style="left:32.8px;top:154.7px;letter-spacing:0.168px;">Boundary Conditions</span>
<svg class="ic" style="left:7.2px;top:174.4px" width="5" height="8" viewBox="0 0 5 8"><path d="M0.8,0.8 L4,4 L0.8,7.2" fill="none" stroke="#a0a0a0" stroke-width="1.3"/></svg>
<svg class="ic" style="left:14.5px;top:171.4px" width="14" height="14" viewBox="0 0 20 20"><circle cx="9" cy="9" r="6.5" fill="#e89820" stroke="#a06010" stroke-width="0.7"/><circle cx="6.5" cy="6.5" r="2.2" fill="#f8d080"/><circle cx="15" cy="14" r="3.5" fill="#e8a840" stroke="#a06010" stroke-width="0.7"/></svg>
<span id="t17" class="t m" style="left:32.8px;top:170.7px;letter-spacing:0.087px;">Materials</span>
<svg class="ic" style="left:14.5px;top:187.4px" width="14" height="14" viewBox="0 0 20 20"><path d="M1.4,5.8 L12,7.7 L12,18 L3.3,14.9 Z" fill="#a86818" stroke="#2a1402" stroke-width="1.0" stroke-linejoin="round"/><path d="M1.4,5.8 L7.9,1.8 L18.2,3 L12,7.7 Z" fill="#7a4808" stroke="#2a1402" stroke-width="1.0" stroke-linejoin="round"/><path d="M12,7.7 L18.2,3 L17,13.6 L12,18 Z" fill="#4a2804" stroke="#2a1402" stroke-width="1.0" stroke-linejoin="round"/><path d="M6.5,6.700 L7.300,16.300 M2.200,10.500 L12,12.500 M14.800,5.500 L14.600,15.800" stroke="#2a1402" stroke-width="0.8"/><path d="M3.500,7.500 L6,8 L6.300,10.500 L3.800,10 Z" fill="#e0a040"/></svg>
<span id="t18" class="t m" style="left:32.8px;top:186.7px;letter-spacing:-0.065px;">Blocks</span>
<svg class="ic" style="left:14.5px;top:203.5px" width="14" height="14" viewBox="0 0 20 20"><rect x="3" y="3" width="14" height="14" fill="#c07a20"/><path d="M2,7.5 H18 M2,12.5 H18 M7.5,2 V18 M12.5,2 V18 M3,2 V18 M17,2 V18 M2,3 H18 M2,17 H18" stroke="#5a3008" stroke-width="1.1"/><rect x="8" y="3.500" width="4" height="3.500" fill="#e8a848"/></svg>
<span id="t19" class="t m" style="left:32.8px;top:202.8px;letter-spacing:-0.311px;">Side Sets</span>
<svg class="ic" style="left:14.5px;top:219.5px" width="14" height="14" viewBox="0 0 20 20"><path d="M3,3 H17 V17 H3 Z M10,3 V17 M3,10 H17" fill="none" stroke="#5a3a10" stroke-width="1.5"/></svg>
<span id="t20" class="t m" style="left:32.8px;top:218.8px;letter-spacing:-0.158px;">Node Sets</span>
<svg class="ic" style="left:14.5px;top:235.5px" width="14" height="14" viewBox="0 0 20 20"><path d="M4,2 V18 M7,2 V18 M2,13 H18 M2,16 H18" stroke="#5a3a7a" stroke-width="1.3"/><rect x="3" y="11" width="15" height="7" fill="#8a6aa8" opacity="0.55"/><rect x="3" y="3" width="5" height="15" fill="#8a6aa8" opacity="0.45"/></svg>
<span id="t21" class="t m" style="left:32.8px;top:234.8px;letter-spacing:-0.020px;">Boundary Layers</span>
<span id="t22" class="t h" style="left:24.5px;top:400.6px;letter-spacing:-0.087px;">Surface 331</span>
<div class="" style="position:absolute;left:170.5px;top:403.5px;width:16.5px;height:16.5px;background:#e6e6e6;border:1px solid #d0d0d0"></div>
<svg class="ic" style="left:172px;top:405px" width="13" height="13" viewBox="0 0 13 13"><rect x="0" y="0" width="13" height="13" fill="#78b020"/><rect x="1.5" y="5" width="4" height="6.5" fill="#1a2a1a"/><rect x="7.5" y="5" width="4" height="6.5" fill="#1a2a1a"/><rect x="3" y="2" width="2" height="4" fill="#1a2a1a"/><rect x="8" y="2" width="2" height="4" fill="#1a2a1a"/><rect x="5" y="6" width="3" height="2.5" fill="#1a2a1a"/></svg>
<div class="dock" style="left:0.0px;top:428.3px;width:212.5px;height:15px"></div><span id="t23" class="t m" style="left:4.0px;top:428.4px;letter-spacing:-0.111px;">Properties Page</span><svg class="ic" style="left:182.5px;top:430.3px" width="26" height="10" viewBox="0 0 26 10"><rect x="0.7" y="4.2" width="4.8" height="4.4" fill="none" stroke="#333" stroke-width="1.2"/><path d="M2.6,4 V2 H7.5 V6.5 H5.7" fill="none" stroke="#333" stroke-width="1.2"/><path d="M17.7,2.400 L23.700,8.600 M23.700,2.400 L17.700,8.600" stroke="#333" stroke-width="1.300"/></svg>
<div class="" style="position:absolute;left:4.8px;top:455.0px;width:204.4px;height:35.5px;border:1px solid #dcdcdc"></div>
<div class="" style="position:absolute;left:8.0px;top:448.0px;width:66.0px;height:12.0px;background:#f0f0f0"></div>
<span id="t24" class="t h" style="left:10.5px;top:446.9px;letter-spacing:0.021px;">Perform Action</span>
<div class="" style="position:absolute;left:10.0px;top:465.3px;width:21.0px;height:20.5px;background:#e4e4e4;border:1px solid #cfcfcf"></div>
<svg class="ic" style="left:11.5px;top:466.5px" width="18" height="18" viewBox="0 0 20 20"><g stroke="#5a2a7a" stroke-width="0.6" fill="#c8a0d8"><rect x="1" y="1" width="6" height="6"/><rect x="7" y="1" width="6" height="6"/><rect x="13" y="1" width="6" height="6"/><rect x="1" y="7" width="6" height="6"/><rect x="7" y="7" width="6" height="6"/><rect x="13" y="7" width="6" height="6"/><rect x="1" y="13" width="6" height="6"/><rect x="7" y="13" width="6" height="6"/><rect x="13" y="13" width="6" height="6"/></g><rect x="4" y="9" width="4.5" height="6" fill="#1a1a1a"/><rect x="10.5" y="9" width="4.5" height="6" fill="#1a1a1a"/><rect x="8" y="10.5" width="3" height="2" fill="#1a1a1a"/></svg>
<div class="" style="position:absolute;left:33.3px;top:465.3px;width:21.0px;height:20.5px;background:#e4e4e4;border:1px solid #cfcfcf"></div>
<svg class="ic" style="left:34.8px;top:466.5px" width="18" height="18" viewBox="0 0 20 20"><path d="M2,2 H8 V8 H13 V13 H18 V18 H2 Z" fill="#8a3aa8" stroke="#4a1a6a" stroke-width="0.7"/><path d="M2,8 H8 M2,13 H13 M8,8 V18 M13,13 V18" stroke="#d0a0e0" stroke-width="0.7"/><path d="M12,3 L17,8" stroke="#b090c0" stroke-width="0.8" stroke-dasharray="1,1"/></svg>
<div class="" style="position:absolute;left:56.6px;top:465.3px;width:21.0px;height:20.5px;background:#e4e4e4;border:1px solid #cfcfcf"></div>
<svg class="ic" style="left:58.1px;top:466.5px" width="18" height="18" viewBox="0 0 20 20"><path d="M1.5,14 C4,7 12,4 18.5,6 C18,12 12,16 1.5,17 Z" fill="#9a4ab8" stroke="#4a1a6a" stroke-width="0.8"/><path d="M5,13 C8,9 13,7.5 17,8" stroke="#d8b0e8" stroke-width="1" fill="none"/></svg>
<div class="" style="position:absolute;left:80.0px;top:465.3px;width:21.0px;height:20.5px;background:#e4e4e4;border:1px solid #cfcfcf"></div>
<svg class="ic" style="left:81.5px;top:466.5px" width="18" height="18" viewBox="0 0 20 20"><circle cx="10" cy="7" r="4.8" fill="#a858c8" stroke="#5a2a7a" stroke-width="0.8"/><circle cx="10" cy="7" r="2" fill="#e0c0f0"/><path d="M7.5,11 L6,18 L10,15.5 L14,18 L12.5,11 Z" fill="#8a3aa8" stroke="#5a2a7a" stroke-width="0.6"/></svg>
<div class="" style="position:absolute;left:103.3px;top:465.3px;width:21.0px;height:20.5px;background:#e4e4e4;border:1px solid #cfcfcf"></div>
<svg class="ic" style="left:104.8px;top:466.5px" width="18" height="18" viewBox="0 0 20 20"><g stroke="#5a2a7a" stroke-width="0.6" fill="#a868c0"><rect x="1" y="1" width="6" height="6"/><rect x="7" y="1" width="6" height="6"/><rect x="13" y="1" width="6" height="6"/><rect x="1" y="7" width="6" height="6"/><rect x="7" y="7" width="6" height="6"/><rect x="13" y="7" width="6" height="6"/><rect x="1" y="13" width="6" height="6"/><rect x="7" y="13" width="6" height="6"/><rect x="13" y="13" width="6" height="6"/></g><path d="M9,2 L17,10 M17,2 L9,10" stroke="#d82020" stroke-width="2.2"/></svg>
<div class="" style="position:absolute;left:126.6px;top:465.3px;width:21.0px;height:20.5px;background:#e4e4e4;border:1px solid #cfcfcf"></div>
<svg class="ic" style="left:128.1px;top:466.5px" width="18" height="18" viewBox="0 0 20 20"><path d="M1.2,11.8 C1.5,7 4,4 7,3.8 L11.8,3.8 L11.8,1.75 L18.2,5.5 L12.1,9.5 L11.8,7.5 L7,7.5 C5,7.6 3.2,9.5 2.3,12.4 Z" fill="#9a4ab8" stroke="#4a1a6a" stroke-width="0.8" stroke-linejoin="round"/><path d="M18.8,8 C18.5,13 16,16 13,16.4 L8.1,16.4 L8.1,18.2 L1.75,14.2 L7.8,10.4 L8.1,12.4 L13,12.4 C15,12.3 16.8,10.5 17.7,7.6 Z" fill="#9a4ab8" stroke="#4a1a6a" stroke-width="0.8" stroke-linejoin="round"/></svg>
<div class="" style="position:absolute;left:182.0px;top:465.3px;width:21.0px;height:20.5px;background:#e4e4e4;border:1px solid #cfcfcf"></div>
<svg class="ic" style="left:183.5px;top:466.5px" width="18" height="18" viewBox="0 0 20 20"><path d="M3,5 L6,2 L10,7 L15,2 L18,5 L13,10 L17,15 L14,18 L10,13 L5,18 L2,15 L7,10 Z" fill="#9a4ab8" stroke="#3a1a5a" stroke-width="0.9"/></svg>
<div class="white" style="position:absolute;left:4.8px;top:496.3px;width:204.4px;height:309.5px;overflow:hidden"></div>
<span id="t25" class="t m" style="left:8.5px;top:498.1px;letter-spacing:0.107px;">Property</span>
<span id="t26" class="t m" style="left:120.3px;top:498.1px;letter-spacing:-0.019px;">Value</span>
<div class="" style="position:absolute;left:116.3px;top:497.5px;width:1.0px;height:18.0px;background:#e5e5e5"></div>
<svg class="ic" style="left:4.8px;top:519.2px" width="8" height="5" viewBox="0 0 8 5"><path d="M0.8,0.8 L4,4 L7.2,0.8" fill="none" stroke="#333" stroke-width="1.4"/></svg>
<span id="t27" class="t m" style="left:15.3px;top:514.0px;letter-spacing:-0.440px;">General</span>
<div class="" style="position:absolute;left:22.0px;top:528.5px;width:173.5px;height:13.6px;background:#f7f7f7"></div>
<span id="t28" class="t m" style="left:23.8px;top:527.6px;letter-spacing:-0.450px;">Id</span>
<span id="t29" class="t m" style="left:119.6px;top:527.6px;letter-spacing:-0.450px;">331</span>
<span id="t30" class="t m" style="left:23.8px;top:541.2px;letter-spacing:-0.289px;">Type</span>
<span id="t31" class="t m" style="left:119.6px;top:541.2px;letter-spacing:-0.007px;">Surface</span>
<div class="" style="position:absolute;left:22.0px;top:555.8px;width:173.5px;height:13.6px;background:#f7f7f7"></div>
<span id="t32" class="t m" style="left:23.8px;top:554.9px;letter-spacing:0.047px;">Name</span>
<span id="t33" class="t m" style="left:119.6px;top:554.9px;letter-spacing:-0.240px;">Surface 331</span>
<span id="t34" class="t m" style="left:23.8px;top:568.5px;letter-spacing:-0.104px;">Idless Signature</span>
<span id="t35" class="t m" style="left:119.6px;top:568.5px;letter-spacing:-0.012px;">calc</span>
<div class="" style="position:absolute;left:22.0px;top:583.0px;width:173.5px;height:13.6px;background:#f7f7f7"></div>
<span id="t36" class="t m" style="left:23.8px;top:582.1px;letter-spacing:0.256px;">Color</span>
<span id="t37" class="t m" style="left:119.6px;top:582.1px;letter-spacing:-0.074px;">Not Set</span>
<span id="t38" class="t m" style="left:23.8px;top:595.7px;letter-spacing:0.105px;">Location</span>
<div style="position:absolute;left:119.6px;top:596px;width:75.5px;height:16px;overflow:hidden"><span id="t39" class="t m" style="left:0.0px;top:0.0px;letter-spacing:-0.262px;">0.076250, 0.005750</span></div>
<div class="" style="position:absolute;left:22.0px;top:610.2px;width:173.5px;height:13.6px;background:#f7f7f7"></div>
<svg class="ic" style="left:4.8px;top:614.5px" width="8" height="5" viewBox="0 0 8 5"><path d="M0.8,0.8 L4,4 L7.2,0.8" fill="none" stroke="#333" stroke-width="1.4"/></svg>
<span id="t40" class="t m" style="left:15.3px;top:609.3px;letter-spacing:0.021px;">Geometry</span>
<span id="t41" class="t m" style="left:23.8px;top:623.0px;letter-spacing:-0.038px;">Is Merged</span>
<span id="t42" class="t m" style="left:119.6px;top:623.0px;letter-spacing:0.055px;">No</span>
<div class="" style="position:absolute;left:22.0px;top:637.5px;width:173.5px;height:13.6px;background:#f7f7f7"></div>
<span id="t43" class="t m" style="left:23.8px;top:636.6px;letter-spacing:0.000px;">Is Virtual</span>
<span id="t44" class="t m" style="left:119.6px;top:636.6px;letter-spacing:0.055px;">No</span>
<span id="t45" class="t m" style="left:23.8px;top:650.2px;letter-spacing:0.008px;">Engine</span>
<span id="t46" class="t m" style="left:119.6px;top:650.2px;letter-spacing:-0.426px;">ACIS</span>
<div class="" style="position:absolute;left:22.0px;top:664.7px;width:173.5px;height:13.6px;background:#f7f7f7"></div>
<span id="t47" class="t m" style="left:23.8px;top:663.8px;letter-spacing:-0.146px;">Surface Area</span>
<span id="t48" class="t m" style="left:119.6px;top:663.8px;letter-spacing:-0.012px;">calc</span>
<span id="t49" class="t m" style="left:23.8px;top:677.4px;letter-spacing:0.067px;">Analytic Type</span>
<span id="t50" class="t m" style="left:119.6px;top:677.4px;letter-spacing:0.013px;">plane surface</span>
<div class="" style="position:absolute;left:22.0px;top:692.0px;width:173.5px;height:13.6px;background:#f7f7f7"></div>
<svg class="ic" style="left:4.8px;top:696.3px" width="8" height="5" viewBox="0 0 8 5"><path d="M0.8,0.8 L4,4 L7.2,0.8" fill="none" stroke="#333" stroke-width="1.4"/></svg>
<span id="t51" class="t m" style="left:15.3px;top:691.1px;letter-spacing:0.194px;">Meshing</span>
<span id="t52" class="t m" style="left:23.8px;top:704.7px;letter-spacing:-0.099px;">Is Meshed</span>
<span id="t53" class="t m" style="left:119.6px;top:704.7px;letter-spacing:0.055px;">No</span>
<div class="" style="position:absolute;left:22.0px;top:719.2px;width:173.5px;height:13.6px;background:#f7f7f7"></div>
<span id="t54" class="t m" style="left:23.8px;top:718.3px;letter-spacing:0.125px;">Number of Elements</span>
<span id="t55" class="t m" style="left:119.6px;top:718.3px;letter-spacing:-0.450px;">0</span>
<span id="t56" class="t m" style="left:23.8px;top:731.9px;letter-spacing:0.209px;">Number of Nodes</span>
<span id="t57" class="t m" style="left:119.6px;top:731.9px;letter-spacing:-0.450px;">0</span>
<div class="" style="position:absolute;left:22.0px;top:746.4px;width:173.5px;height:13.6px;background:#f7f7f7"></div>
<span id="t58" class="t m" style="left:23.8px;top:745.5px;letter-spacing:-0.089px;">Requested Intervals</span>
<span id="t59" class="t m" style="left:119.6px;top:745.5px;letter-spacing:-0.074px;">Not Set</span>
<span id="t60" class="t m" style="left:23.8px;top:759.2px;letter-spacing:-0.260px;">Requested Size</span>
<span id="t61" class="t m" style="left:119.6px;top:759.2px;letter-spacing:-0.012px;">calc</span>
<div class="" style="position:absolute;left:22.0px;top:773.7px;width:173.5px;height:13.6px;background:#f7f7f7"></div>
<span id="t62" class="t m" style="left:23.8px;top:772.8px;letter-spacing:0.018px;">Meshed Area</span>
<span id="t63" class="t m" style="left:119.6px;top:772.8px;letter-spacing:-0.012px;">calc</span>
<div style="position:absolute;left:6px;top:786.1px;width:189px;height:6.3px;overflow:hidden">
<span class="t m" style="left:17.8px;top:0">Mesh Scheme</span><span class="t m" style="left:113.6px;top:0">Default</span></div>
<div class="" style="position:absolute;left:195.5px;top:497.3px;width:13.0px;height:295.0px;background:#f0f0f0"></div>
<div class="" style="position:absolute;left:195.5px;top:510.5px;width:13.0px;height:233.0px;background:#cdcdcd"></div>
<svg class="ic" style="left:198.5px;top:502px" width="7" height="5" viewBox="0 0 7 5"><path d="M0.6,4.2 L3.5,1 L6.4,4.2" fill="none" stroke="#555" stroke-width="1.2"/></svg>
<svg class="ic" style="left:198.5px;top:782px" width="7" height="5" viewBox="0 0 7 5"><path d="M0.6,0.8 L3.5,4 L6.4,0.8" fill="none" stroke="#555" stroke-width="1.2"/></svg>
<div class="" style="position:absolute;left:5.8px;top:792.4px;width:202.4px;height:12.4px;background:#f0f0f0"></div>
<div class="" style="position:absolute;left:18.0px;top:792.4px;width:150.5px;height:12.4px;background:#cdcdcd"></div>
<svg class="ic" style="left:9px;top:795px" width="5" height="7" viewBox="0 0 5 7"><path d="M4.2,0.6 L1,3.5 L4.2,6.4" fill="none" stroke="#555" stroke-width="1.2"/></svg>
<svg class="ic" style="left:185px;top:795px" width="5" height="7" viewBox="0 0 5 7"><path d="M0.8,0.6 L4,3.5 L0.8,6.4" fill="none" stroke="#555" stroke-width="1.2"/></svg>
<div style="position:absolute;left:216px;top:61px;width:1073px;height:531px;overflow:hidden"><svg id="vp" width="1073" height="531" viewBox="216 61 1073 531" shape-rendering="geometricPrecision">
<defs>
<linearGradient id="bg" x1="0" y1="0" x2="0" y2="1"><stop offset="0" stop-color="#000"/><stop offset="1" stop-color="#fff"/></linearGradient>
<linearGradient id="cyl" gradientUnits="userSpaceOnUse" x1="1210" y1="372" x2="1166" y2="580"><stop offset="0" stop-color="#000044"/><stop offset="0.1" stop-color="#00006c"/><stop offset="0.32" stop-color="#000094"/><stop offset="0.62" stop-color="#000098"/><stop offset="0.82" stop-color="#000074"/><stop offset="1" stop-color="#00004c"/></linearGradient>
</defs>
<rect x="216" y="61" width="1073" height="531" fill="url(#bg)"/>
<polygon points="216.0,61.0 297.0,61.0 278.5,67.0 278.5,268.5 216.0,256.0" fill="#0000b0" />
<polygon points="216.0,256.0 278.5,268.5 278.5,537.0 216.0,524.0" fill="#aa00aa" />
<polygon points="216.0,524.0 278.5,537.0 485.5,581.5 531.0,592.0 216.0,592.0" fill="#2e8b8b" />
<polygon points="296.0,61.0 661.0,61.0 495.5,107.0" fill="#36221c" />
<polygon points="495.5,107.0 661.0,61.0 693.0,67.0 693.0,150.0" fill="#3a162a" />
<polygon points="661.0,61.0 693.0,61.0 693.0,67.0" fill="#2e8b8b" />
<polygon points="278.5,67.0 296.0,61.3 495.5,107.0 486.0,110.5" fill="#3b4630" />
<polygon points="486.0,110.0 496.0,108.0 600.0,130.0 564.0,128.0" fill="#00494a" />
<polygon points="564.0,127.0 575.0,125.0 600.0,130.0 596.0,134.5" fill="#0c0c48" />
<polygon points="596.0,134.5 600.0,130.0 693.0,149.5 693.0,155.0" fill="#4a1832" />
<polygon points="278.5,66.5 410.0,94.0 410.0,300.0 278.5,268.5" fill="#adad98" />
<polygon points="278.5,268.5 388.5,292.0 486.0,330.0 486.0,581.5 278.5,537.0" fill="#6aaa6a" />
<polygon points="486.0,360.0 692.0,400.0 692.0,592.0 531.0,592.0 486.0,581.5" fill="#2f5878" />
<polygon points="376.0,87.0 409.0,93.0 409.0,241.0 376.0,234.0" fill="#206040" />
<path d="M409,94.5 L486,110.5 L486,314.5 L436,303.5 C418,292 409,270 409,241 Z" fill="#a5a078"/>
<path d="M376,234 L409,241 C409,270 418,292 436,303.5 C446,311 452,315 461,319 L461,360.5 C410,345 378,300 376,234 Z" fill="#00ab55"/>
<path d="M436,303.5 L486,314.5 L486,325 L461,319.5 C452,315 446,311 436,303.5 Z" fill="#8b1a1a"/>
<polygon points="461.0,319.5 507.0,329.5 507.0,369.5 461.0,360.5" fill="#7a3820" />
<path d="M486,110.5 L564,127.5 L564,208.5 C564,270 590,320 649,337 L692,346 L692,357 L486,314.5 Z" fill="#008b8b"/>
<polygon points="564.0,127.5 596.0,134.5 596.0,215.0 564.0,208.5" fill="#4a3d96" />
<path d="M564,208.5 L596,215 C596,262 612,288 649,296.5 L649,337 C590,320 564,270 564,208.5 Z" fill="#7aa4a4"/>
<path d="M596,134.5 L693,155 L693,304.5 L649,296.5 C612,288 596,262 596,215 Z" fill="#9a4e68"/>
<polygon points="649.0,296.5 693.0,304.5 693.0,346.0 649.0,337.0" fill="#2e9a9a" />
<polygon points="486.0,314.5 692.0,357.0 692.0,369.0 507.0,330.5 486.0,326.0" fill="#7a9a20" />
<polygon points="507.0,331.5 692.0,369.5 692.0,406.0 507.0,369.5" fill="#7010a4" />
<line x1="507.0" y1="331.5" x2="692.0" y2="369.5" stroke="#c890b0" stroke-width="1.6" />
<line x1="507.0" y1="369.5" x2="692.0" y2="406.5" stroke="#c890b0" stroke-width="2" />
<line x1="296.0" y1="61.3" x2="495.5" y2="107.0" stroke="#d08a78" stroke-width="1.4" />
<line x1="495.5" y1="107.0" x2="661.0" y2="61.5" stroke="#d08a78" stroke-width="1.4" />
<line x1="495.5" y1="107.0" x2="693.0" y2="149.5" stroke="#d08a9a" stroke-width="1.2" />
<line x1="278.5" y1="66.5" x2="376.0" y2="87.0" stroke="#e8e8d8" stroke-width="1" />
<line x1="278.5" y1="66.5" x2="278.5" y2="537.0" stroke="#d8d8d0" stroke-width="1" />
<line x1="376.0" y1="87.0" x2="376.0" y2="234.0" stroke="#e8ffe8" stroke-width="1" />
<line x1="409.0" y1="94.0" x2="409.0" y2="241.0" stroke="#c8e8c8" stroke-width="1" />
<line x1="486.0" y1="110.5" x2="486.0" y2="314.5" stroke="#d0e8d8" stroke-width="1" />
<line x1="486.0" y1="365.0" x2="486.0" y2="581.5" stroke="#d0e8d8" stroke-width="1" />
<line x1="278.5" y1="268.5" x2="388.5" y2="292.0" stroke="#e0e8c8" stroke-width="1" />
<line x1="278.5" y1="537.0" x2="485.5" y2="581.5" stroke="#b0ffb0" stroke-width="1" />
<line x1="216.0" y1="524.0" x2="278.5" y2="537.0" stroke="#c0a0d0" stroke-width="0.8" />
<line x1="564.0" y1="127.5" x2="564.0" y2="208.5" stroke="#40d0d0" stroke-width="1" />
<line x1="596.0" y1="134.5" x2="596.0" y2="215.0" stroke="#c07088" stroke-width="1" />
<path d="M376,234 C378,300 410,345 461,360.5" fill="none" stroke="#70ffb0" stroke-width="1"/>
<path d="M409,241 C409,270 418,292 436,303.5" fill="none" stroke="#90e8b0" stroke-width="1"/>
<path d="M564,208.5 C564,270 590,320 649,337 L692,346" fill="none" stroke="#70f0f0" stroke-width="1"/>
<path d="M596,215 C596,262 612,288 649,296.5" fill="none" stroke="#d0d0d8" stroke-width="1"/>
<line x1="649.0" y1="296.5" x2="649.0" y2="337.0" stroke="#60e0e0" stroke-width="1" />
<ellipse cx="395.5" cy="90" rx="17.5" ry="3" fill="#06240e" transform="rotate(10 395.5 90)"/>
<ellipse cx="581" cy="130" rx="17" ry="2.8" fill="#0a0a48" transform="rotate(11 581 130)"/>
<polygon points="693.0,61.0 764.0,61.0 764.0,206.0 693.0,191.0" fill="#008c00" />
<polygon points="764.0,61.0 828.0,61.0 828.0,219.5 764.0,206.0" fill="#aa5a50" />
<polygon points="828.0,61.0 997.0,61.0 997.0,190.0 880.0,165.0 835.0,168.0 835.0,216.5 828.0,219.5" fill="#954a42" />
<line x1="764.0" y1="61.0" x2="764.0" y2="206.0" stroke="#d0c0a0" stroke-width="1" />
<line x1="828.0" y1="61.0" x2="828.0" y2="219.0" stroke="#e09088" stroke-width="1" />
<line x1="997.0" y1="61.0" x2="997.0" y2="190.0" stroke="#b06058" stroke-width="1" />
<polygon points="699.0,192.0 797.0,212.5 797.0,251.5 699.0,231.5" fill="#5aae92" />
<polygon points="797.0,212.5 828.0,219.5 835.0,217.0 835.0,258.0 797.0,251.5" fill="#4a9a82" />
<line x1="797.0" y1="212.5" x2="797.0" y2="251.5" stroke="#b0ffe0" stroke-width="1" />
<line x1="699.0" y1="192.0" x2="797.0" y2="212.5" stroke="#90ffc0" stroke-width="1" />
<polygon points="892.0,181.0 955.0,193.5 955.0,241.5 1289.0,312.5 1289.0,358.5 1124.0,323.0 892.0,273.0" fill="#5f1e9e" />
<polygon points="892.0,181.0 905.0,172.0 997.0,190.0 985.0,190.0 955.0,193.5" fill="#14002a" />
<path d="M955,193.5 C975,188 1000,190 1020,200 C1045,212 1065,235 1078,259 L955,241.5 Z" fill="#4f1a88"/>
<path d="M955,193.5 C975,188 1000,190 1020,200 C1045,212 1065,235 1078,259" fill="none" stroke="#7a3ac0" stroke-width="1"/>
<line x1="955.0" y1="193.5" x2="955.0" y2="241.5" stroke="#8a50d0" stroke-width="1" />
<polygon points="955.0,241.5 977.0,239.0 1289.0,304.0 1289.0,312.5" fill="#14002a" />
<polygon points="835.0,168.0 892.0,179.0 892.0,273.0 835.0,260.5" fill="#adad98" />
<path d="M835,168.5 C838,165 850,164 862,166 L905,173 L892,180 Z" fill="#2a2c26"/>
<path d="M835,168.5 C838,165 850,164 862,166" fill="none" stroke="#f0f0e0" stroke-width="1"/>
<line x1="835.0" y1="168.0" x2="835.0" y2="260.0" stroke="#e8e8d8" stroke-width="1" />
<line x1="892.0" y1="180.0" x2="892.0" y2="273.0" stroke="#d8d0e8" stroke-width="1" />
<polygon points="699.0,231.3 1124.5,323.1 1124.5,364.1 699.0,273.8" fill="#004c00" />
<polygon points="699.0,273.8 1124.5,364.1 1124.5,401.6 699.0,311.3" fill="#b04630" />
<polygon points="699.0,311.3 1124.5,401.6 1124.5,434.6 699.0,344.8" fill="#78ae22" />
<polygon points="699.0,344.8 1124.5,434.6 1124.5,464.1 699.0,374.8" fill="#b04630" />
<polygon points="699.0,374.8 1124.5,464.1 1124.5,498.1 699.0,407.8" fill="#5c8cac" />
<polygon points="699.0,407.8 1124.5,498.1 1124.5,535.1 699.0,445.6" fill="#b04630" />
<polygon points="699.0,445.6 1124.5,535.1 1124.5,576.6 699.0,487.8" fill="#004c00" />
<polygon points="692.0,310.0 700.0,311.5 700.0,345.0 692.0,343.5" fill="#78ae22" />
<polygon points="692.0,373.5 700.0,375.0 700.0,408.0 692.0,406.5" fill="#5c8cac" />
<rect x="692.5" y="191.0" width="7" height="40.0" fill="#2e9064"/>
<rect x="692.5" y="231.0" width="7" height="42.0" fill="#a4b8b4"/>
<rect x="692.5" y="273.0" width="7" height="37.0" fill="#c060c0"/>
<rect x="692.5" y="343.5" width="7" height="14.5" fill="#c060c0"/>
<rect x="692.5" y="358.0" width="7" height="16.0" fill="#e08800"/>
<rect x="692.5" y="406.5" width="7" height="38.5" fill="#a89070"/>
<rect x="692.5" y="445.0" width="7" height="41.5" fill="#2070c0"/>
<rect x="692.5" y="486.5" width="7" height="39.0" fill="#b494ac"/>
<path d="M799,251.7 C805,249.3 820,250.5 834.5,256.5 L834.5,261 L799,253.2 Z" fill="#001800"/>
<polygon points="1124.5,323.0 1289.0,358.5 1289.0,592.0 1187.5,592.0 1124.5,576.5" fill="url(#cyl)" />
<polygon points="1124.5,323.0 1289.0,358.5 1289.0,401.5 1165.0,374.0 1124.5,364.0" fill="#0000a0" />
<polygon points="1124.5,537.0 1289.0,569.5 1289.0,592.0 1187.5,592.0 1124.5,576.5" fill="#00009c" />
<path d="M1124.5,364 C1162,364 1181,405 1181,442 C1181,490 1158,535 1124.5,535 Z" fill="#983c2c"/>
<line x1="1124.5" y1="364.0" x2="1124.5" y2="535.0" stroke="#e07860" stroke-width="1" />
<path d="M1124.5,401.5 C1132,401.5 1136,409 1136,418 C1136,427 1132,434.5 1124.5,434.5 Z" fill="#6a9e22" stroke="#c8e840" stroke-width="0.8"/>
<path d="M1124.5,464 C1132,464 1136,472 1136,481 C1136,490 1132,498 1124.5,498 Z" fill="#5686a6" stroke="#a0d0e8" stroke-width="0.8"/>
<line x1="699.0" y1="311.3" x2="1124.5" y2="401.6" stroke="#e8a060" stroke-width="0.7" />
<line x1="699.0" y1="344.8" x2="1124.5" y2="434.6" stroke="#e8c040" stroke-width="0.7" />
<line x1="699.0" y1="374.8" x2="1124.5" y2="464.1" stroke="#e0a0a0" stroke-width="0.7" />
<line x1="699.0" y1="407.8" x2="1124.5" y2="498.1" stroke="#e0a0a0" stroke-width="0.7" />
<polygon points="692.0,520.0 763.0,536.0 763.0,592.0 692.0,592.0" fill="#229022" />
<polygon points="700.0,488.0 797.0,508.0 797.0,546.5 700.0,526.0" fill="#5aae92" />
<polygon points="797.0,508.0 833.0,517.5 833.0,529.5 797.0,546.5" fill="#4a9a82" />
<polygon points="797.0,546.5 833.0,529.5 833.0,553.5" fill="#64003c" />
<polygon points="763.0,541.5 797.0,546.5 827.0,552.5 827.0,592.0 763.0,592.0" fill="#b01070" />
<polygon points="827.0,552.5 833.0,553.5 833.0,592.0 827.0,592.0" fill="#a00c64" />
<polygon points="833.0,517.5 891.0,528.0 891.0,592.0 833.0,592.0" fill="#adad98" />
<polygon points="891.0,528.0 1124.5,576.5 1187.5,592.0 891.0,592.0" fill="#5f1e9e" />
<polygon points="952.5,586.0 985.0,592.0 952.5,592.0" fill="#4f1a88" />
<line x1="797.0" y1="508.0" x2="797.0" y2="546.5" stroke="#b0ffe0" stroke-width="1" />
<line x1="763.0" y1="541.5" x2="763.0" y2="592.0" stroke="#e8a0c0" stroke-width="0.8" />
<line x1="827.0" y1="552.5" x2="827.0" y2="592.0" stroke="#e868a8" stroke-width="0.8" />
<line x1="833.0" y1="517.5" x2="833.0" y2="592.0" stroke="#e8e8d8" stroke-width="1" />
<line x1="891.0" y1="528.0" x2="891.0" y2="592.0" stroke="#c8b8e0" stroke-width="0.8" />
<line x1="692.0" y1="525.5" x2="692.0" y2="592.0" stroke="#90d890" stroke-width="0.8" />
<line x1="692.0" y1="155.0" x2="692.0" y2="525.0" stroke="#c0c8c0" stroke-width="0.6" />
<line x1="279.5" y1="559.0" x2="279.5" y2="541.0" stroke="#20e020" stroke-width="2" />
<polygon points="277.0,543.0 282.0,543.0 279.5,537.0" fill="#20e020" />
<line x1="279.0" y1="560.0" x2="260.0" y2="559.0" stroke="#1020e0" stroke-width="2" />
<polygon points="262.0,556.5 262.0,561.5 255.0,559.0" fill="#1020e0" />
<text x="279.5" y="533" font-family="Liberation Sans,sans-serif" font-size="8" fill="#c8c8c8">Y</text>
<text x="252" y="557" font-family="Liberation Sans,sans-serif" font-size="8" fill="#c8c8c8">Z</text>
<text x="274" y="567" font-family="Liberation Sans,sans-serif" font-size="8" fill="#e03030">X</text>
</svg></div>
<div class="dock" style="left:217.0px;top:596.0px;width:1072.3px;height:15px"></div><span id="t64" class="t c" style="left:221.0px;top:596.1px;letter-spacing:0.500px;">Command Line</span><svg class="ic" style="left:1259.3px;top:598.0px" width="26" height="10" viewBox="0 0 26 10"><rect x="0.7" y="4.2" width="4.8" height="4.4" fill="none" stroke="#333" stroke-width="1.2"/><path d="M2.6,4 V2 H7.5 V6.5 H5.7" fill="none" stroke="#333" stroke-width="1.2"/><path d="M17.7,2.400 L23.700,8.600 M23.700,2.400 L17.700,8.600" stroke="#333" stroke-width="1.300"/></svg>
<div class="white" style="position:absolute;left:219.3px;top:616.0px;width:1065.5px;height:176.5px;"></div>
<span id="t65" class="t c" style="left:222.8px;top:614.5px;letter-spacing:0.056px;">pcurve location != coedge location:</span>
<span id="t66" class="t c" style="left:222.8px;top:624.9px;letter-spacing:0.073px;">pcurve direction != coedge direction:</span>
<span id="t67" class="t c" style="left:222.8px;top:635.3px;letter-spacing:0.056px;">pcurve location != coedge location:</span>
<span id="t68" class="t c" style="left:222.8px;top:645.7px;letter-spacing:-0.037px;">Found 2 bad coedges in Volume 29. The curves: 452, 460</span>
<span id="t69" class="t c" style="left:222.8px;top:656.1px;letter-spacing:-0.038px;">ERROR: with 'Volume 29' in the ACIS geometry.</span>
<span id="t70" class="t c" style="left:222.8px;top:666.5px;letter-spacing:0.056px;">pcurve location != coedge location:</span>
<span id="t71" class="t c" style="left:222.8px;top:676.9px;letter-spacing:0.056px;">pcurve location != coedge location:</span>
<span id="t72" class="t c" style="left:222.8px;top:687.3px;letter-spacing:0.056px;">pcurve location != coedge location:</span>
<span id="t73" class="t c" style="left:222.8px;top:697.7px;letter-spacing:0.056px;">pcurve location != coedge location:</span>
<span id="t74" class="t c" style="left:222.8px;top:708.1px;letter-spacing:0.056px;">pcurve location != coedge location:</span>
<span id="t75" class="t c" style="left:222.8px;top:718.5px;letter-spacing:0.056px;">pcurve location != coedge location:</span>
<span id="t76" class="t c" style="left:222.8px;top:728.9px;letter-spacing:0.056px;">pcurve location != coedge location:</span>
<span id="t77" class="t c" style="left:222.8px;top:739.3px;letter-spacing:0.056px;">pcurve location != coedge location:</span>
<span id="t78" class="t c" style="left:222.8px;top:749.7px;letter-spacing:-0.030px;">Found 2 bad coedges in bushing2@H. The curves: 510, 511</span>
<span id="t79" class="t c" style="left:222.8px;top:760.1px;letter-spacing:-0.066px;">ERROR: with 'bushing2@H' in the ACIS geometry.</span>
<span id="t80" class="t c" style="left:222.8px;top:770.5px;letter-spacing:0.273px;">Cubit&gt;</span>
<div class="" style="position:absolute;left:1270.5px;top:617.0px;width:13.3px;height:174.5px;background:#f0f0f0"></div>
<div class="" style="position:absolute;left:1270.5px;top:719.5px;width:13.3px;height:57.5px;background:#cdcdcd"></div>
<svg class="ic" style="left:1273.7px;top:621.5px" width="7" height="5" viewBox="0 0 7 5"><path d="M0.6,4.2 L3.5,1 L6.4,4.2" fill="none" stroke="#555" stroke-width="1.2"/></svg>
<svg class="ic" style="left:1273.7px;top:782px" width="7" height="5" viewBox="0 0 7 5"><path d="M0.6,0.8 L3.5,4 L6.4,0.8" fill="none" stroke="#555" stroke-width="1.2"/></svg>
<svg class="ic" style="left:217px;top:792px" width="200" height="18" viewBox="217 792 200 18"><g fill="none" stroke="#555" stroke-width="0.9"><path d="M218.4,795.5 C220,803 221,807 224.5,807 H251.5 C254,807 255,803 256.3,795.5"/><path d="M317,795.5 C318.5,803 320,807 323,807 H363.5 C366,807 367,803 368.2,795.5"/><path d="M370.2,795.5 C372,803 373,807 376,807 H410 C412.5,807 413.5,803 414.6,795.5"/></g><path d="M258,794 C260,803 261.5,808.5 265,808.5 H308.500 C312,808.5 313.5,803 315,794 Z" fill="#fcfcfc" stroke="none"/><path d="M258,794 C260,803 261.5,808.5 265,808.5 H308.500 C312,808.5 313.5,803 315,794" fill="none" stroke="#444" stroke-width="0.9"/><path d="M325.600,805.300 L331.200,795 L336.800,805.300 Z" fill="#f4dc28" stroke="#9a8200" stroke-width="0.8"/><path d="M331.200,798.300 V802.300" stroke="#222" stroke-width="1.300"/><circle cx="331.2" cy="803.900" r="0.75" fill="#222"/></svg>
<span id="t81" class="t c" style="left:226.6px;top:794.1px;letter-spacing:-0.036px;">Script</span>
<span id="t82" class="t c" style="left:268.0px;top:794.6px;letter-spacing:-0.368px;">Command</span>
<span id="t83" class="t c" style="left:340.5px;top:794.1px;letter-spacing:-0.062px;">Error</span>
<span id="t84" class="t c" style="left:378.8px;top:794.1px;letter-spacing:-0.004px;">History</span>
<div class="" style="position:absolute;left:1294.0px;top:77.0px;width:242.0px;height:716.0px;background:#fff"></div>
<div class="dock" style="left:1294.0px;top:61.8px;width:242.0px;height:15px"></div><span id="t85" class="t c" style="left:1298.0px;top:61.9px;letter-spacing:0.348px;">Power Tools</span><svg class="ic" style="left:1506.0px;top:63.8px" width="26" height="10" viewBox="0 0 26 10"><rect x="0.7" y="4.2" width="4.8" height="4.4" fill="none" stroke="#333" stroke-width="1.2"/><path d="M2.6,4 V2 H7.5 V6.5 H5.7" fill="none" stroke="#333" stroke-width="1.2"/><path d="M17.7,2.400 L23.700,8.600 M23.700,2.400 L17.700,8.600" stroke="#333" stroke-width="1.300"/></svg>
<div class="" style="position:absolute;left:1294.0px;top:79.5px;width:242.0px;height:17.5px;background:#f0f0f0;border-bottom:1px solid #d9d9d9"></div>
<div class="" style="position:absolute;left:1327.8px;top:78.5px;width:35.7px;height:19.0px;background:#fff;border:1px solid #d9d9d9;border-bottom:none"></div>
<div class="" style="position:absolute;left:1363.3px;top:80.5px;width:1.0px;height:16.0px;background:#dcdcdc"></div>
<div class="" style="position:absolute;left:1398.0px;top:80.5px;width:1.0px;height:16.0px;background:#dcdcdc"></div>
<div class="" style="position:absolute;left:1433.0px;top:80.5px;width:1.0px;height:16.0px;background:#dcdcdc"></div>
<div class="" style="position:absolute;left:1467.5px;top:80.5px;width:1.0px;height:16.0px;background:#dcdcdc"></div>
<div class="" style="position:absolute;left:1502.0px;top:80.5px;width:1.0px;height:16.0px;background:#dcdcdc"></div>
<svg class="ic" style="left:1300.1px;top:81px" width="15" height="15" viewBox="0 0 20 20"><path d="M3,4 L16,16" stroke="#2a4a8a" stroke-width="2.2"/><path d="M15,3 L7,15 L5,17" stroke="#889" stroke-width="1.8"/><path d="M5,10 L9,17 L12,12 Z" fill="#e8c020"/><path d="M13,2 L17,6 L15,8 L11,4 Z" fill="#3a5a9a"/></svg>
<svg class="ic" style="left:1337.5px;top:81px" width="15" height="15" viewBox="0 0 20 20"><path d="M7,2 H13 V9 H7 Z" fill="#3a5aa8" stroke="#1a2a6a" stroke-width="0.6"/><circle cx="7" cy="13" r="4.5" fill="#4a6ab8" stroke="#1a2a6a" stroke-width="0.6"/><path d="M13,8 L18,17 H9 Z" fill="#e8d8b0" stroke="#8a7a50" stroke-width="0.6"/></svg>
<svg class="ic" style="left:1372.2px;top:81px" width="15" height="15" viewBox="0 0 20 20"><path d="M2,6 L12,5 L12.500,16 L3,15 Z" fill="#6a2a9a" stroke="#2a0a4a" stroke-width="0.8"/><path d="M2,6 L6,2.500 L17,2.500 L12,5 Z" fill="#9a5ac8" stroke="#2a0a4a" stroke-width="0.8"/><path d="M12,5 L17,2.500 L17,13 L12.500,16 Z" fill="#3a0a6a" stroke="#2a0a4a" stroke-width="0.8"/><rect x="4" y="7.5" width="5" height="3" fill="#e8e0f0"/><rect x="4" y="11" width="5" height="3" fill="#c030c0"/></svg>
<svg class="ic" style="left:1408.3px;top:81px" width="15" height="15" viewBox="0 0 20 20"><circle cx="10" cy="7" r="4.8" fill="#a858c8" stroke="#5a2a7a" stroke-width="0.8"/><circle cx="10" cy="7" r="2" fill="#e0c0f0"/><path d="M7.5,11 L6,18 L10,15.5 L14,18 L12.5,11 Z" fill="#8a3aa8" stroke="#5a2a7a" stroke-width="0.6"/></svg>
<svg class="ic" style="left:1441.5px;top:81px" width="15" height="15" viewBox="0 0 20 20"><rect x="4" y="3" width="13" height="11" fill="#2a3a6a" stroke="#0a1a3a"/><path d="M3,18 L12,8" stroke="#3a4a7a" stroke-width="2"/><path d="M9,6 L14,6 L14,11 Z" fill="#c8d0e8"/></svg>
<svg class="ic" style="left:1476.0px;top:81px" width="15" height="15" viewBox="0 0 20 20"><path d="M11,11 L17,17" stroke="#2a2a2a" stroke-width="2.4"/><circle cx="8" cy="8" r="5" fill="#b4bce0" stroke="#8088b8" stroke-width="1.4"/><circle cx="6.500" cy="6.500" r="1.800" fill="#e0e4f4"/></svg>
<div class="" style="position:absolute;left:1513.4px;top:80.0px;width:12.0px;height:17.0px;background:#d2d2d2;border:1px solid #c4c4c4"></div>
<div class="" style="position:absolute;left:1525.4px;top:80.0px;width:10.6px;height:17.0px;background:#e4e4e4;border:1px solid #adadad"></div>
<svg class="ic" style="left:1517px;top:85px" width="5" height="7" viewBox="0 0 5 7"><path d="M4.5,0 L0.5,3.5 L4.5,7 Z" fill="#aaa"/></svg>
<svg class="ic" style="left:1528.5px;top:85px" width="5" height="7" viewBox="0 0 5 7"><path d="M0.5,0 L4.5,3.5 L0.5,7 Z" fill="#111"/></svg>
<svg class="ic" style="left:1300px;top:106px" width="14" height="14" viewBox="0 0 20 20"><path d="M1.4,5.8 L12,7.7 L12,18 L3.3,14.9 Z" fill="#5a90c8" stroke="#0a1a3a" stroke-width="0.9" stroke-linejoin="round"/><path d="M1.4,5.8 L7.9,1.8 L18.2,3 L12,7.7 Z" fill="#2a4a7a" stroke="#0a1a3a" stroke-width="0.9" stroke-linejoin="round"/><path d="M12,7.7 L18.2,3 L17,13.6 L12,18 Z" fill="#1a2a4a" stroke="#0a1a3a" stroke-width="0.9" stroke-linejoin="round"/></svg>
<span id="t86" class="t c" style="left:1317.0px;top:105.3px;letter-spacing:-0.102px;">Volume ID(s)</span>
<div class="" style="position:absolute;left:1370.5px;top:105.2px;width:156.5px;height:15.8px;background:#fff;border:1px solid #7a7a8a"></div>
<div class="" style="position:absolute;left:1372.3px;top:107.0px;width:153.0px;height:12.2px;background:#a8a8fa"></div>
<span id="t87" class="t c" style="left:1373.0px;top:105.6px;letter-spacing:-0.234px;">all</span>
<span id="t88" class="t c" style="left:1300.3px;top:125.6px;letter-spacing:-0.153px;">Small Curve Threshold</span>
<div class="" style="position:absolute;left:1389.0px;top:125.6px;width:74.0px;height:15.2px;background:#fff;border:1px solid #7a7a7a"></div>
<span id="t89" class="t c" style="left:1392.0px;top:125.6px;letter-spacing:0.209px;">0.00181587</span>
<div class="btn" style="position:absolute;left:1468.0px;top:125.3px;width:58.5px;height:16.0px;"></div>
<span id="t90" class="t c" style="left:1487.5px;top:125.6px;letter-spacing:0.281px;">Auto</span>
<div class="btn" style="position:absolute;left:1301.3px;top:146.5px;width:22.2px;height:21.5px;"></div>
<svg class="ic" style="left:1303.9px;top:148.800px" width="17" height="17" viewBox="0 0 17 17"><circle cx="8.5" cy="8.500" r="7.2" fill="none" stroke="#222" stroke-width="1.1"/><path d="M8.5,7.500 V12.5" stroke="#222" stroke-width="1.4"/><circle cx="8.5" cy="5" r="0.9" fill="#222"/></svg>
<div class="btn" style="position:absolute;left:1332.7px;top:149.3px;width:58.0px;height:16.2px;"></div>
<span id="t91" class="t c" style="left:1342.5px;top:149.9px;letter-spacing:0.081px;">Options...</span>
<div class="btn" style="position:absolute;left:1397.0px;top:149.3px;width:58.0px;height:16.2px;"></div>
<span id="t92" class="t c" style="left:1410.5px;top:149.9px;letter-spacing:0.011px;">Analyze</span>
<div class="" style="position:absolute;left:1460.0px;top:153.0px;width:10.0px;height:10.0px;background:#fff;border:1px solid #333"></div>
<span id="t93" class="t c" style="left:1474.3px;top:150.1px;letter-spacing:-0.028px;">Auto Update</span>
<div class="" style="position:absolute;left:1301.0px;top:175.5px;width:10.0px;height:10.0px;background:#fff;border:1px solid #333"></div>
<span id="t94" class="t c" style="left:1314.8px;top:172.6px;letter-spacing:-0.171px;">Show Solutions</span>
<div class="white" style="position:absolute;left:1301.0px;top:190.0px;width:226.0px;height:517.0px;"></div>
<span id="t95" class="t m" style="left:1304.7px;top:192.1px;letter-spacing:0.047px;">Name</span>
<span id="t96" class="t m" style="left:1431.6px;top:192.1px;letter-spacing:-0.160px;">Data</span>
<div class="" style="position:absolute;left:1427.9px;top:191.5px;width:1.0px;height:16.0px;background:#e5e5e5"></div>
<svg class="ic" style="left:1361px;top:190.500px" width="7" height="4" viewBox="0 0 7 4"><path d="M0.5,0.5 L3.5,3.3 L6.5,0.5" fill="none" stroke="#888" stroke-width="0.8"/></svg>
<div class="" style="position:absolute;left:1327.8px;top:252.5px;width:199.0px;height:15.5px;background:#cce8ff"></div>
<div class="" style="position:absolute;left:1327.8px;top:252.5px;width:100.0px;height:15.5px;border:1px dotted #444"></div>
<svg class="ic" style="left:1301.7px;top:213.1px" width="8" height="5" viewBox="0 0 8 5"><path d="M0.8,0.8 L4,4 L7.2,0.8" fill="none" stroke="#333" stroke-width="1.4"/></svg>
<span id="t97" class="t m" style="left:1312.0px;top:207.9px;letter-spacing:-0.181px;">Small Features</span>
<svg class="ic" style="left:1309.7px;top:227.0px" width="8" height="5" viewBox="0 0 8 5"><path d="M0.8,0.8 L4,4 L7.2,0.8" fill="none" stroke="#333" stroke-width="1.4"/></svg>
<span id="t98" class="t m" style="left:1320.0px;top:221.8px;letter-spacing:-0.137px;">Small Surfaces (2)</span>
<span id="t99" class="t m" style="left:1430.3px;top:221.8px;letter-spacing:-0.160px;">Area</span>
<svg class="ic" style="left:1319.2px;top:240.5px" width="5" height="8" viewBox="0 0 5 8"><path d="M0.8,0.8 L4,4 L0.8,7.2" fill="none" stroke="#a0a0a0" stroke-width="1.3"/></svg>
<svg class="ic" style="left:1327.5px;top:238.5px" width="12" height="12" viewBox="0 0 20 20"><path d="M3,2.500 L16,4.500 L16.500,18 L4.500,15 Z" fill="#2a5a9a" stroke="#0a1a3a" stroke-width="1.2"/></svg>
<span id="t100" class="t m" style="left:1345.7px;top:236.8px;letter-spacing:-0.195px;">Surface 319</span>
<span id="t101" class="t m" style="left:1430.3px;top:236.8px;letter-spacing:-0.312px;">0.00004250</span>
<svg class="ic" style="left:1319.2px;top:256.3px" width="5" height="8" viewBox="0 0 5 8"><path d="M0.8,0.8 L4,4 L0.8,7.2" fill="none" stroke="#a0a0a0" stroke-width="1.3"/></svg>
<svg class="ic" style="left:1327.5px;top:254.3px" width="12" height="12" viewBox="0 0 20 20"><path d="M3,2.500 L16,4.500 L16.500,18 L4.500,15 Z" fill="#2a5a9a" stroke="#0a1a3a" stroke-width="1.2"/></svg>
<span id="t102" class="t m" style="left:1345.7px;top:252.6px;letter-spacing:-0.195px;">Surface 331</span>
<span id="t103" class="t m" style="left:1430.3px;top:252.6px;letter-spacing:-0.312px;">0.00004250</span>
<svg class="ic" style="left:1301.7px;top:272.5px" width="8" height="5" viewBox="0 0 8 5"><path d="M0.8,0.8 L4,4 L7.2,0.8" fill="none" stroke="#333" stroke-width="1.4"/></svg>
<span id="t104" class="t m" style="left:1312.0px;top:267.3px;letter-spacing:-0.234px;">Traits</span>
<svg class="ic" style="left:1311.2px;top:284.8px" width="5" height="8" viewBox="0 0 5 8"><path d="M0.8,0.8 L4,4 L0.8,7.2" fill="none" stroke="#a0a0a0" stroke-width="1.3"/></svg>
<span id="t105" class="t m" style="left:1320.0px;top:281.1px;letter-spacing:-0.091px;">Cavities (57)</span>
<span id="t106" class="t m" style="left:1430.3px;top:281.1px;letter-spacing:-0.160px;">Area</span>
<svg class="ic" style="left:1311.2px;top:298.7px" width="5" height="8" viewBox="0 0 5 8"><path d="M0.8,0.8 L4,4 L0.8,7.2" fill="none" stroke="#a0a0a0" stroke-width="1.3"/></svg>
<span id="t107" class="t m" style="left:1320.0px;top:295.0px;letter-spacing:-0.115px;">Bad Def Curves (4)</span>
<svg class="ic" style="left:1301.7px;top:313.7px" width="8" height="5" viewBox="0 0 8 5"><path d="M0.8,0.8 L4,4 L7.2,0.8" fill="none" stroke="#333" stroke-width="1.4"/></svg>
<span id="t108" class="t m" style="left:1312.0px;top:308.5px;letter-spacing:-0.059px;">Assembly Checks</span>
<svg class="ic" style="left:1309.7px;top:327.3px" width="8" height="5" viewBox="0 0 8 5"><path d="M0.8,0.8 L4,4 L7.2,0.8" fill="none" stroke="#333" stroke-width="1.4"/></svg>
<span id="t109" class="t m" style="left:1320.0px;top:322.1px;letter-spacing:0.040px;">Volume Contacts (2)</span>
<span id="t110" class="t m" style="left:1430.3px;top:322.1px;letter-spacing:-0.022px;">Overlap Area</span>
<svg class="ic" style="left:1319.2px;top:339.6px" width="5" height="8" viewBox="0 0 5 8"><path d="M0.8,0.8 L4,4 L0.8,7.2" fill="none" stroke="#a0a0a0" stroke-width="1.3"/></svg>
<span id="t111" class="t m" style="left:1328.0px;top:335.9px;letter-spacing:-0.131px;">Vol 20 - Vol 26</span>
<svg class="ic" style="left:1319.2px;top:353.2px" width="5" height="8" viewBox="0 0 5 8"><path d="M0.8,0.8 L4,4 L0.8,7.2" fill="none" stroke="#a0a0a0" stroke-width="1.3"/></svg>
<span id="t112" class="t m" style="left:1328.0px;top:349.5px;letter-spacing:-0.131px;">Vol 22 - Vol 26</span>
<svg class="ic" style="left:1311.2px;top:366.7px" width="5" height="8" viewBox="0 0 5 8"><path d="M0.8,0.8 L4,4 L0.8,7.2" fill="none" stroke="#a0a0a0" stroke-width="1.3"/></svg>
<span id="t113" class="t m" style="left:1320.0px;top:363.0px;letter-spacing:-0.104px;">Mergeable Surfaces (163)</span>
<span id="t114" class="t m" style="left:1430.3px;top:363.0px;letter-spacing:-0.160px;">Area</span>
<svg class="ic" style="left:1301.7px;top:381.8px" width="8" height="5" viewBox="0 0 8 5"><path d="M0.8,0.8 L4,4 L7.2,0.8" fill="none" stroke="#333" stroke-width="1.4"/></svg>
<span id="t115" class="t m" style="left:1312.0px;top:376.6px;letter-spacing:0.005px;">Part Classification</span>
<span id="t116" class="t m" style="left:1320.0px;top:390.1px;letter-spacing:-0.169px;">Inserts (0)</span>
<span id="t117" class="t m" style="left:1430.3px;top:390.1px;letter-spacing:0.145px;">Confidence</span>
<svg class="ic" style="left:1363px;top:252px" width="10" height="16" viewBox="0 0 10 16"><path d="M0.5,0.5 V12.5 L3.3,9.800 L5.300,14.500 L7.300,13.600 L5.300,9 H9 Z" fill="#fff" stroke="#000" stroke-width="0.9"/></svg>
<div class="" style="position:absolute;left:1301.0px;top:727.5px;width:226.0px;height:55.8px;border:1px solid #e0e0e0"></div>
<span id="t118" class="t c" style="left:1301.3px;top:725.6px;letter-spacing:-0.219px;">Real</span>
<span id="t119" class="t c" style="left:1402.0px;top:725.6px;letter-spacing:0.076px;">Virtual</span>
<div class="" style="position:absolute;left:1302.2px;top:739.3px;width:21.3px;height:20.6px;background:#e4e4e4;border:1px solid #cfcfcf"></div>
<svg class="ic" style="left:1303.9px;top:740.3px" width="18" height="18" viewBox="0 0 20 20"><path d="M3,4 C7,2.500 13,2.500 17,4 V15 C13,13.500 7,13.500 3,15 Z" fill="#4c5ca6" stroke="#1a2250" stroke-width="1.2"/><path d="M6,9.500 H14" stroke="#1a2a5a" stroke-width="0.8" stroke-dasharray="1.5,1"/></svg>
<div class="" style="position:absolute;left:1325.6px;top:739.3px;width:21.3px;height:20.6px;background:#e4e4e4;border:1px solid #cfcfcf"></div>
<svg class="ic" style="left:1327.3px;top:740.3px" width="18" height="18" viewBox="0 0 20 20"><path d="M2,15 L14,2.500 L18,5.500 L6,18 Z" fill="#6a88d0" stroke="#1a2250" stroke-width="1"/></svg>
<div class="" style="position:absolute;left:1349.0px;top:739.3px;width:21.3px;height:20.6px;background:#e4e4e4;border:1px solid #cfcfcf"></div>
<svg class="ic" style="left:1350.7px;top:740.3px" width="18" height="18" viewBox="0 0 20 20"><rect x="2" y="2" width="16" height="16" fill="#4c5ca6" stroke="#1a2250" stroke-width="1"/><path d="M2,18 L18,2 L10,18 Z" fill="#f0f0f8" stroke="#1a2a5a" stroke-width="0.6"/><path d="M2,18 L6,12" stroke="#111" stroke-width="1"/></svg>
<div class="" style="position:absolute;left:1372.3px;top:739.3px;width:21.3px;height:20.6px;background:#e4e4e4;border:1px solid #cfcfcf"></div>
<svg class="ic" style="left:1374.0px;top:740.3px" width="18" height="18" viewBox="0 0 20 20"><rect x="2.500" y="2.500" width="10" height="10" fill="#4c5ca6" stroke="#1a2250"/><path d="M7,7 H17.500 V17.500 H7 Z M2.500,12.500 L7,17.500 M12.500,2.500 L17.500,7" fill="none" stroke="#334" stroke-width="0.8"/><rect x="9" y="9" width="6" height="5" fill="#3a4a7a"/></svg>
<div class="" style="position:absolute;left:1403.0px;top:739.3px;width:21.3px;height:20.6px;background:#e4e4e4;border:1px solid #cfcfcf"></div>
<svg class="ic" style="left:1404.7px;top:740.3px" width="18" height="18" viewBox="0 0 20 20"><path d="M3,17 C5,10 8,8 10,11 C11,6 14,4 18,3" fill="none" stroke="#4a68b0" stroke-width="2.2"/><path d="M7,13 L11,9 L9,8 M12,9 L14,6" stroke="#1a2a5a" stroke-width="0.9" fill="none"/></svg>
<div class="" style="position:absolute;left:1426.3px;top:739.3px;width:21.3px;height:20.6px;background:#e4e4e4;border:1px solid #cfcfcf"></div>
<svg class="ic" style="left:1428.0px;top:740.3px" width="18" height="18" viewBox="0 0 20 20"><path d="M3,10 L17,3 L11,18 L9,11 Z" fill="#c8d0e8" stroke="#2a3a6a" stroke-width="1"/><path d="M9,11 L17,3" stroke="#2a3a6a" stroke-width="0.8"/></svg>
<div class="" style="position:absolute;left:1449.6px;top:739.3px;width:21.3px;height:20.6px;background:#e4e4e4;border:1px solid #cfcfcf"></div>
<svg class="ic" style="left:1451.3px;top:740.3px" width="18" height="18" viewBox="0 0 20 20"><path d="M4,3 H14 C17,3 17,6 17,8 V17 H10 V11 H4 Z" fill="#4c5ca6" stroke="#1a2250" stroke-width="0.9"/><path d="M3,17 L9,11" stroke="#667" stroke-width="0.8"/><path d="M6,5 L11,5 M13,9 V15" stroke="#1a2a5a" stroke-width="0.9"/></svg>
<div class="" style="position:absolute;left:1473.0px;top:739.3px;width:21.3px;height:20.6px;background:#e4e4e4;border:1px solid #cfcfcf"></div>
<svg class="ic" style="left:1474.7px;top:740.3px" width="18" height="18" viewBox="0 0 20 20"><path d="M5,4 H15 M14,4 C17,8 16,13 16,17 M11,6 C13,9 12,12 12,15" fill="none" stroke="#334" stroke-width="0.9"/><path d="M3,17 L9,11" stroke="#889" stroke-width="0.8"/><path d="M6,6 L10,6" stroke="#334" stroke-width="0.8"/></svg>
<div class="" style="position:absolute;left:1504.2px;top:739.3px;width:21.3px;height:20.6px;background:#e4e4e4;border:1px solid #cfcfcf"></div>
<svg class="ic" style="left:1505.9px;top:740.3px" width="18" height="18" viewBox="0 0 20 20"><path d="M1.2,11.8 C1.5,7 4,4 7,3.8 L11.8,3.8 L11.8,1.75 L18.2,5.5 L12.1,9.5 L11.8,7.5 L7,7.5 C5,7.6 3.2,9.5 2.3,12.4 Z" fill="#4c5ca6" stroke="#1a2250" stroke-width="0.8" stroke-linejoin="round"/><path d="M18.8,8 C18.5,13 16,16 13,16.4 L8.1,16.4 L8.1,18.2 L1.75,14.2 L7.8,10.4 L8.1,12.4 L13,12.4 C15,12.3 16.8,10.5 17.7,7.6 Z" fill="#4c5ca6" stroke="#1a2250" stroke-width="0.8" stroke-linejoin="round"/></svg>
<div class="" style="position:absolute;left:1302.2px;top:761.5px;width:21.3px;height:20.6px;background:#e4e4e4;border:1px solid #cfcfcf"></div>
<svg class="ic" style="left:1303.9px;top:762.5px" width="18" height="18" viewBox="0 0 20 20"><path d="M3,5 L6,2 L10,7 L15,2 L18,5 L13,10 L17,15 L14,18 L10,13 L5,18 L2,15 L7,10 Z" fill="#4c5ca6" stroke="#1a2250" stroke-width="0.9"/></svg>
<div class="" style="position:absolute;left:1325.6px;top:761.5px;width:21.3px;height:20.6px;background:#e4e4e4;border:1px solid #cfcfcf"></div>
<svg class="ic" style="left:1327.3px;top:762.5px" width="18" height="18" viewBox="0 0 20 20"><rect x="3" y="2.500" width="10" height="10" fill="#4c5ca6" stroke="#1a2250"/><rect x="8" y="8" width="9.500" height="9.500" fill="#f0f0f8" stroke="#556"/><rect x="9.500" y="9.500" width="4" height="3.500" fill="#3a4a7a"/></svg>
<div class="" style="position:absolute;left:1349.0px;top:761.5px;width:21.3px;height:20.6px;background:#e4e4e4;border:1px solid #cfcfcf"></div>
<svg class="ic" style="left:1350.7px;top:762.5px" width="18" height="18" viewBox="0 0 20 20"><path d="M4.500,6 H14 L13,15.500 C11,17.800 7.500,17.800 5.500,15.500 Z" fill="#5a6270" stroke="#2a2e38" stroke-width="0.900"/><ellipse cx="9.200" cy="14.200" rx="4" ry="2.800" fill="#f0f0f0"/><ellipse cx="9.200" cy="6" rx="4.700" ry="1.500" fill="#8a92a0" stroke="#2a2e38" stroke-width="0.600"/><path d="M9.500,12.500 L15,4.500" stroke="#3a3a40" stroke-width="2"/><path d="M14.600,5 L16.500,2.300" stroke="#8a5a2a" stroke-width="2"/></svg>
<div class="" style="position:absolute;left:1372.3px;top:761.5px;width:21.3px;height:20.6px;background:#e4e4e4;border:1px solid #cfcfcf"></div>
<svg class="ic" style="left:1374.0px;top:762.5px" width="18" height="18" viewBox="0 0 20 20"><path d="M4,3 H14 C17,3 17,6 17,8 V17 H10 V11 H4 Z" fill="#4c5ca6" stroke="#1a2250" stroke-width="0.9"/><path d="M3,17 L9,11" stroke="#667" stroke-width="0.8"/><path d="M6,5 L11,5 M13,9 V15" stroke="#1a2a5a" stroke-width="0.9"/></svg>
<div class="" style="position:absolute;left:1294.0px;top:793.0px;width:242.0px;height:18.0px;background:#f0f0f0;border-top:1px solid #d9d9d9"></div>
<div class="" style="position:absolute;left:1294.0px;top:792.5px;width:65.5px;height:17.5px;background:#fff;border:1px solid #d9d9d9;border-top:none"></div>
<span id="t120" class="t c" style="left:1301.4px;top:794.9px;letter-spacing:0.030px;">Power Tools</span>
<span id="t121" class="t c" style="left:1367.6px;top:794.1px;letter-spacing:-0.286px;">Command Panel</span>
<span id="t122" class="t m" style="left:2.0px;top:814.8px;letter-spacing:0.164px;">Working Directory: C:/Users/karl/sandia/cubit_no_fork/cubit_test/collapse</span>
<div class="" style="position:absolute;left:928.0px;top:812.0px;width:562.0px;height:18.5px;background:#e6e6e6;border:1px solid #bcbcbc"></div>
<div class="" style="position:absolute;left:1519.0px;top:813.0px;width:16.0px;height:18.0px;background:#e8e8e8;border:1px solid #d0d0d0"></div>
<svg class="ic" style="left:1520px;top:814.500px" width="14" height="14" viewBox="0 0 14 14"><circle cx="7" cy="7" r="6" fill="#e01818" stroke="#8a0a0a" stroke-width="0.8"/><path d="M4.800,4.800 L9.200,9.200 M9.200,4.800 L4.800,9.200" stroke="#fff" stroke-width="1.500"/></svg>
</div></body></html>
